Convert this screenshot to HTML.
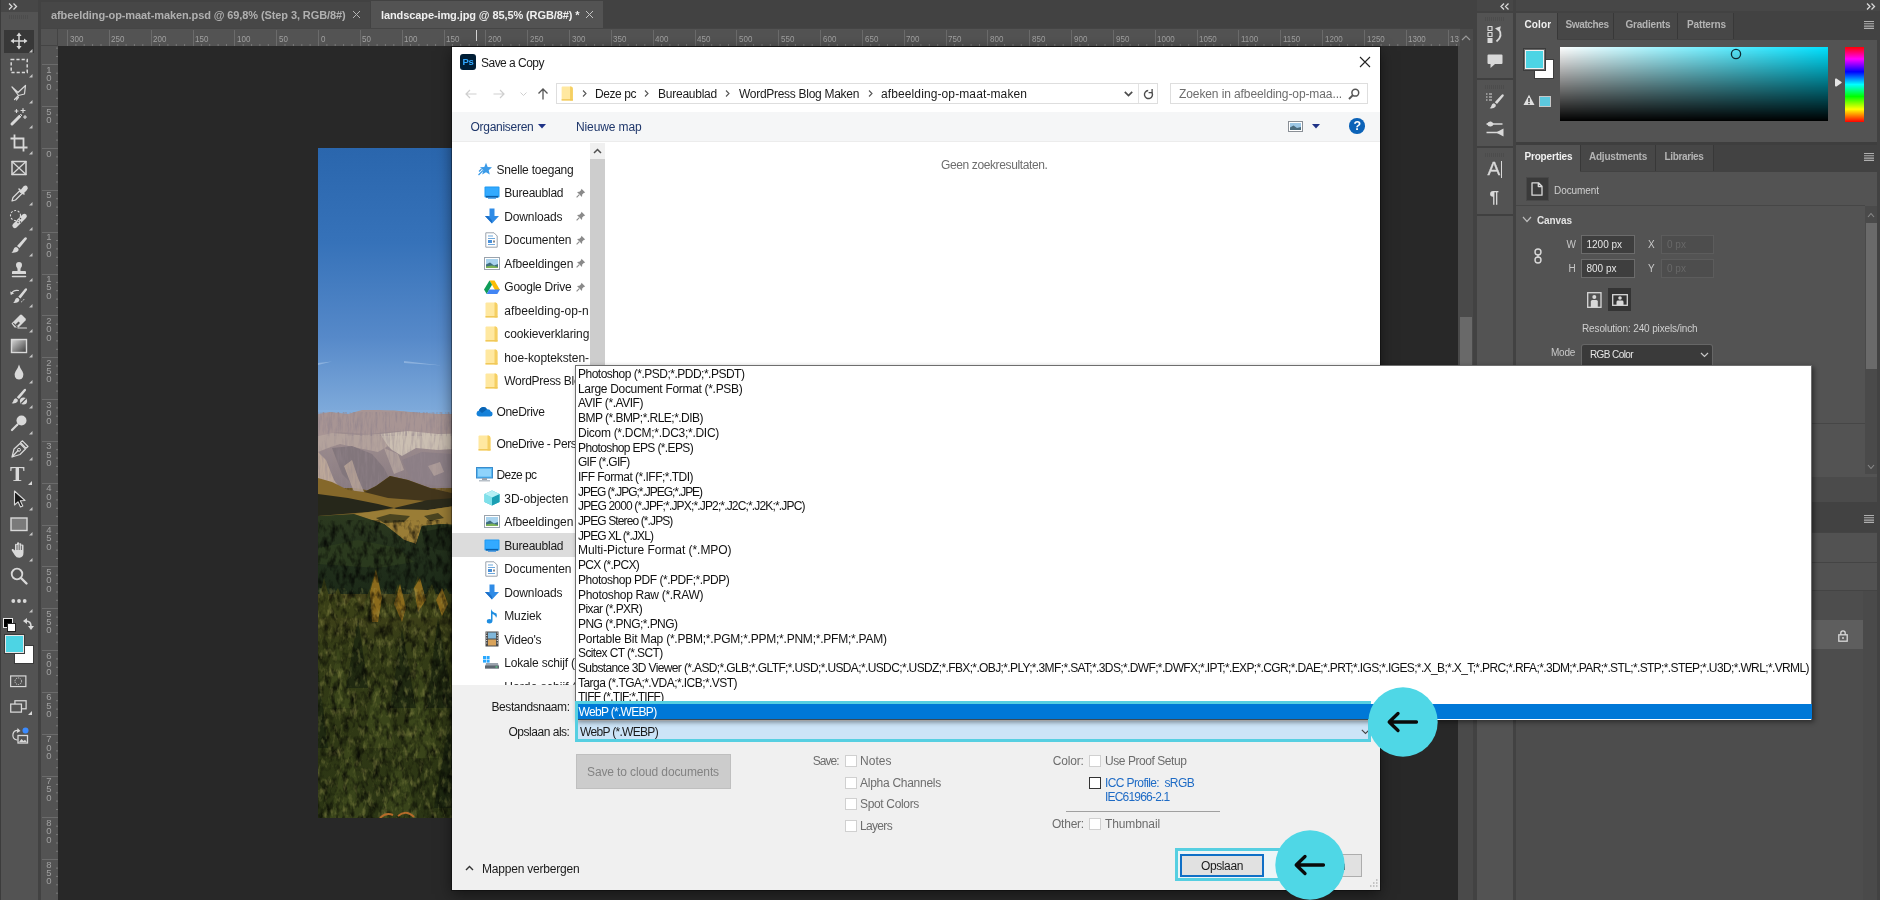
<!DOCTYPE html>
<html lang="nl">
<head>
<meta charset="utf-8">
<title>Save a Copy</title>
<style>
html,body{margin:0;padding:0;}
body{width:1880px;height:900px;overflow:hidden;position:relative;background:#282828;font-family:"Liberation Sans",sans-serif;font-size:12px;color:#000;}
.a{position:absolute;}
.t{position:absolute;white-space:pre;line-height:1;}
svg{position:absolute;overflow:visible;}
/* ---------- Photoshop chrome ---------- */
#tabbar{left:38px;top:0;width:1438px;height:29px;background:#424242;}
#tab1{left:41px;top:2px;width:329px;height:26px;background:#474747;}
#tab2{left:371px;top:1px;width:232px;height:27px;background:#535353;}
.tabt{font-weight:bold;font-size:11px;top:9.5px;letter-spacing:-0.1px;}
#hruler{left:41px;top:29px;box-shadow:0 -1px 0 #454545;width:1419px;height:17px;background:#535353;}
#vruler{left:41px;top:46px;width:17px;height:854px;background:#535353;}
.rl{transform:scaleX(.84);transform-origin:0 50%;}
#toolbar{left:0;top:0;width:38px;height:900px;background:#535353;}
#toolhead{left:0;top:0;width:38px;height:12px;background:#474747;}
.vsb{left:1460px;top:29px;width:13px;height:871px;background:#4a4a4a;}
/* right */
#rgap{left:1473px;top:0;width:407px;height:900px;background:#424242;}
#iconcol{left:1477px;top:13px;width:36px;height:887px;background:#535353;}
#rpanel{left:1516px;top:13px;width:364px;height:887px;background:#535353;}
.ptab{font-weight:bold;font-size:10px;color:#b9b9b9;}
/* ---------- Dialog ---------- */
#dlg{left:452px;top:47px;width:927.5px;height:842.5px;background:#fff;box-shadow:0 0 0 1px rgba(0,0,0,.35),0 4px 14px rgba(0,0,0,.5);}
.d{color:#1a1a1a;font-size:12px;}
.side{font-size:12px;color:#111;}
.li{left:578px;font-size:12px;color:#111;letter-spacing:-0.15px;}
.g{color:#6d6d6d;font-size:12px;}
.cb{width:10px;height:10px;border:1px solid #cfcfcf;background:#fff;}
#root{position:absolute;left:0;top:0;width:1880px;height:900px;will-change:transform;}
</style>
</head>
<body>
<div id="root">

<!-- ================= PHOTOSHOP BACKGROUND ================= -->
<div class="a" id="tabbar"></div>
<div class="a" id="tab1"></div>
<div class="a" id="tab2"></div>
<div class="t tabt" style="left:51px;color:#b0b0b0;">afbeelding-op-maat-maken.psd @ 69,8% (Step 3, RGB/8#)</div>
<svg style="left:352.8px;top:11.3px" width="7" height="7" viewBox="0 0 7 7"><path d="M0 0 L7 7 M7 0 L0 7" stroke="#b4b4b4" stroke-width="1"/></svg>
<div class="t tabt" style="left:381px;color:#f0f0f0;">landscape-img.jpg @ 85,5% (RGB/8#) *</div>
<svg style="left:585.8px;top:11.3px" width="7" height="7" viewBox="0 0 7 7"><path d="M0 0 L7 7 M7 0 L0 7" stroke="#c4c4c4" stroke-width="1"/></svg>

<div class="a" id="hruler"></div>
<div class="a" id="vruler"></div>
<div class="a vsb"></div>
<div class="a" style="left:67.0px;top:30px;width:1px;height:16px;background:#6b6b6b;"></div>
<div class="t rl" style="left:69.6px;top:33.8px;font-size:9.5px;color:#a0a0a0;">300</div>
<div class="a" style="left:108.8px;top:30px;width:1px;height:16px;background:#6b6b6b;"></div>
<div class="t rl" style="left:111.4px;top:33.8px;font-size:9.5px;color:#a0a0a0;">250</div>
<div class="a" style="left:150.7px;top:30px;width:1px;height:16px;background:#6b6b6b;"></div>
<div class="t rl" style="left:153.3px;top:33.8px;font-size:9.5px;color:#a0a0a0;">200</div>
<div class="a" style="left:192.5px;top:30px;width:1px;height:16px;background:#6b6b6b;"></div>
<div class="t rl" style="left:195.1px;top:33.8px;font-size:9.5px;color:#a0a0a0;">150</div>
<div class="a" style="left:234.3px;top:30px;width:1px;height:16px;background:#6b6b6b;"></div>
<div class="t rl" style="left:236.9px;top:33.8px;font-size:9.5px;color:#a0a0a0;">100</div>
<div class="a" style="left:276.2px;top:30px;width:1px;height:16px;background:#6b6b6b;"></div>
<div class="t rl" style="left:278.8px;top:33.8px;font-size:9.5px;color:#a0a0a0;">50</div>
<div class="a" style="left:318.0px;top:30px;width:1px;height:16px;background:#6b6b6b;"></div>
<div class="t rl" style="left:320.6px;top:33.8px;font-size:9.5px;color:#a0a0a0;">0</div>
<div class="a" style="left:359.8px;top:30px;width:1px;height:16px;background:#6b6b6b;"></div>
<div class="t rl" style="left:362.4px;top:33.8px;font-size:9.5px;color:#a0a0a0;">50</div>
<div class="a" style="left:401.7px;top:30px;width:1px;height:16px;background:#6b6b6b;"></div>
<div class="t rl" style="left:404.3px;top:33.8px;font-size:9.5px;color:#a0a0a0;">100</div>
<div class="a" style="left:443.5px;top:30px;width:1px;height:16px;background:#6b6b6b;"></div>
<div class="t rl" style="left:446.1px;top:33.8px;font-size:9.5px;color:#a0a0a0;">150</div>
<div class="a" style="left:485.3px;top:30px;width:1px;height:16px;background:#6b6b6b;"></div>
<div class="t rl" style="left:487.9px;top:33.8px;font-size:9.5px;color:#a0a0a0;">200</div>
<div class="a" style="left:527.2px;top:30px;width:1px;height:16px;background:#6b6b6b;"></div>
<div class="t rl" style="left:529.8px;top:33.8px;font-size:9.5px;color:#a0a0a0;">250</div>
<div class="a" style="left:569.0px;top:30px;width:1px;height:16px;background:#6b6b6b;"></div>
<div class="t rl" style="left:571.6px;top:33.8px;font-size:9.5px;color:#a0a0a0;">300</div>
<div class="a" style="left:610.8px;top:30px;width:1px;height:16px;background:#6b6b6b;"></div>
<div class="t rl" style="left:613.4px;top:33.8px;font-size:9.5px;color:#a0a0a0;">350</div>
<div class="a" style="left:652.7px;top:30px;width:1px;height:16px;background:#6b6b6b;"></div>
<div class="t rl" style="left:655.3px;top:33.8px;font-size:9.5px;color:#a0a0a0;">400</div>
<div class="a" style="left:694.5px;top:30px;width:1px;height:16px;background:#6b6b6b;"></div>
<div class="t rl" style="left:697.1px;top:33.8px;font-size:9.5px;color:#a0a0a0;">450</div>
<div class="a" style="left:736.4px;top:30px;width:1px;height:16px;background:#6b6b6b;"></div>
<div class="t rl" style="left:739.0px;top:33.8px;font-size:9.5px;color:#a0a0a0;">500</div>
<div class="a" style="left:778.2px;top:30px;width:1px;height:16px;background:#6b6b6b;"></div>
<div class="t rl" style="left:780.8px;top:33.8px;font-size:9.5px;color:#a0a0a0;">550</div>
<div class="a" style="left:820.0px;top:30px;width:1px;height:16px;background:#6b6b6b;"></div>
<div class="t rl" style="left:822.6px;top:33.8px;font-size:9.5px;color:#a0a0a0;">600</div>
<div class="a" style="left:861.9px;top:30px;width:1px;height:16px;background:#6b6b6b;"></div>
<div class="t rl" style="left:864.5px;top:33.8px;font-size:9.5px;color:#a0a0a0;">650</div>
<div class="a" style="left:903.7px;top:30px;width:1px;height:16px;background:#6b6b6b;"></div>
<div class="t rl" style="left:906.3px;top:33.8px;font-size:9.5px;color:#a0a0a0;">700</div>
<div class="a" style="left:945.5px;top:30px;width:1px;height:16px;background:#6b6b6b;"></div>
<div class="t rl" style="left:948.1px;top:33.8px;font-size:9.5px;color:#a0a0a0;">750</div>
<div class="a" style="left:987.4px;top:30px;width:1px;height:16px;background:#6b6b6b;"></div>
<div class="t rl" style="left:990.0px;top:33.8px;font-size:9.5px;color:#a0a0a0;">800</div>
<div class="a" style="left:1029.2px;top:30px;width:1px;height:16px;background:#6b6b6b;"></div>
<div class="t rl" style="left:1031.8px;top:33.8px;font-size:9.5px;color:#a0a0a0;">850</div>
<div class="a" style="left:1071.0px;top:30px;width:1px;height:16px;background:#6b6b6b;"></div>
<div class="t rl" style="left:1073.6px;top:33.8px;font-size:9.5px;color:#a0a0a0;">900</div>
<div class="a" style="left:1112.9px;top:30px;width:1px;height:16px;background:#6b6b6b;"></div>
<div class="t rl" style="left:1115.5px;top:33.8px;font-size:9.5px;color:#a0a0a0;">950</div>
<div class="a" style="left:1154.7px;top:30px;width:1px;height:16px;background:#6b6b6b;"></div>
<div class="t rl" style="left:1157.3px;top:33.8px;font-size:9.5px;color:#a0a0a0;">1000</div>
<div class="a" style="left:1196.5px;top:30px;width:1px;height:16px;background:#6b6b6b;"></div>
<div class="t rl" style="left:1199.1px;top:33.8px;font-size:9.5px;color:#a0a0a0;">1050</div>
<div class="a" style="left:1238.4px;top:30px;width:1px;height:16px;background:#6b6b6b;"></div>
<div class="t rl" style="left:1241.0px;top:33.8px;font-size:9.5px;color:#a0a0a0;">1100</div>
<div class="a" style="left:1280.2px;top:30px;width:1px;height:16px;background:#6b6b6b;"></div>
<div class="t rl" style="left:1282.8px;top:33.8px;font-size:9.5px;color:#a0a0a0;">1150</div>
<div class="a" style="left:1322.0px;top:30px;width:1px;height:16px;background:#6b6b6b;"></div>
<div class="t rl" style="left:1324.6px;top:33.8px;font-size:9.5px;color:#a0a0a0;">1200</div>
<div class="a" style="left:1363.9px;top:30px;width:1px;height:16px;background:#6b6b6b;"></div>
<div class="t rl" style="left:1366.5px;top:33.8px;font-size:9.5px;color:#a0a0a0;">1250</div>
<div class="a" style="left:1405.7px;top:30px;width:1px;height:16px;background:#6b6b6b;"></div>
<div class="t rl" style="left:1408.3px;top:33.8px;font-size:9.5px;color:#a0a0a0;">1300</div>
<div class="a" style="left:1447.5px;top:30px;width:1px;height:16px;background:#6b6b6b;"></div>
<div class="t rl" style="left:1450.1px;top:33.8px;font-size:9.5px;color:#a0a0a0;">13</div>
<svg style="left:41px;top:44px;" width="1417" height="2" viewBox="0 0 1417 2"><rect x="34.4" y="0" width="1" height="2" fill="#787878"/><rect x="42.7" y="0" width="1" height="2" fill="#787878"/><rect x="51.1" y="0" width="1" height="2" fill="#787878"/><rect x="59.5" y="0" width="1" height="2" fill="#787878"/><rect x="76.2" y="0" width="1" height="2" fill="#787878"/><rect x="84.6" y="0" width="1" height="2" fill="#787878"/><rect x="92.9" y="0" width="1" height="2" fill="#787878"/><rect x="101.3" y="0" width="1" height="2" fill="#787878"/><rect x="118.0" y="0" width="1" height="2" fill="#787878"/><rect x="126.4" y="0" width="1" height="2" fill="#787878"/><rect x="134.8" y="0" width="1" height="2" fill="#787878"/><rect x="143.1" y="0" width="1" height="2" fill="#787878"/><rect x="159.9" y="0" width="1" height="2" fill="#787878"/><rect x="168.2" y="0" width="1" height="2" fill="#787878"/><rect x="176.6" y="0" width="1" height="2" fill="#787878"/><rect x="185.0" y="0" width="1" height="2" fill="#787878"/><rect x="201.7" y="0" width="1" height="2" fill="#787878"/><rect x="210.1" y="0" width="1" height="2" fill="#787878"/><rect x="218.4" y="0" width="1" height="2" fill="#787878"/><rect x="226.8" y="0" width="1" height="2" fill="#787878"/><rect x="243.5" y="0" width="1" height="2" fill="#787878"/><rect x="251.9" y="0" width="1" height="2" fill="#787878"/><rect x="260.3" y="0" width="1" height="2" fill="#787878"/><rect x="268.6" y="0" width="1" height="2" fill="#787878"/><rect x="285.4" y="0" width="1" height="2" fill="#787878"/><rect x="293.7" y="0" width="1" height="2" fill="#787878"/><rect x="302.1" y="0" width="1" height="2" fill="#787878"/><rect x="310.5" y="0" width="1" height="2" fill="#787878"/><rect x="327.2" y="0" width="1" height="2" fill="#787878"/><rect x="335.6" y="0" width="1" height="2" fill="#787878"/><rect x="343.9" y="0" width="1" height="2" fill="#787878"/><rect x="352.3" y="0" width="1" height="2" fill="#787878"/><rect x="369.0" y="0" width="1" height="2" fill="#787878"/><rect x="377.4" y="0" width="1" height="2" fill="#787878"/><rect x="385.8" y="0" width="1" height="2" fill="#787878"/><rect x="394.1" y="0" width="1" height="2" fill="#787878"/><rect x="410.9" y="0" width="1" height="2" fill="#787878"/><rect x="419.2" y="0" width="1" height="2" fill="#787878"/><rect x="427.6" y="0" width="1" height="2" fill="#787878"/><rect x="436.0" y="0" width="1" height="2" fill="#787878"/><rect x="452.7" y="0" width="1" height="2" fill="#787878"/><rect x="461.1" y="0" width="1" height="2" fill="#787878"/><rect x="469.4" y="0" width="1" height="2" fill="#787878"/><rect x="477.8" y="0" width="1" height="2" fill="#787878"/><rect x="494.5" y="0" width="1" height="2" fill="#787878"/><rect x="502.9" y="0" width="1" height="2" fill="#787878"/><rect x="511.3" y="0" width="1" height="2" fill="#787878"/><rect x="519.6" y="0" width="1" height="2" fill="#787878"/><rect x="536.4" y="0" width="1" height="2" fill="#787878"/><rect x="544.7" y="0" width="1" height="2" fill="#787878"/><rect x="553.1" y="0" width="1" height="2" fill="#787878"/><rect x="561.5" y="0" width="1" height="2" fill="#787878"/><rect x="578.2" y="0" width="1" height="2" fill="#787878"/><rect x="586.6" y="0" width="1" height="2" fill="#787878"/><rect x="594.9" y="0" width="1" height="2" fill="#787878"/><rect x="603.3" y="0" width="1" height="2" fill="#787878"/><rect x="620.0" y="0" width="1" height="2" fill="#787878"/><rect x="628.4" y="0" width="1" height="2" fill="#787878"/><rect x="636.8" y="0" width="1" height="2" fill="#787878"/><rect x="645.1" y="0" width="1" height="2" fill="#787878"/><rect x="661.9" y="0" width="1" height="2" fill="#787878"/><rect x="670.2" y="0" width="1" height="2" fill="#787878"/><rect x="678.6" y="0" width="1" height="2" fill="#787878"/><rect x="687.0" y="0" width="1" height="2" fill="#787878"/><rect x="703.7" y="0" width="1" height="2" fill="#787878"/><rect x="712.1" y="0" width="1" height="2" fill="#787878"/><rect x="720.5" y="0" width="1" height="2" fill="#787878"/><rect x="728.8" y="0" width="1" height="2" fill="#787878"/><rect x="745.6" y="0" width="1" height="2" fill="#787878"/><rect x="753.9" y="0" width="1" height="2" fill="#787878"/><rect x="762.3" y="0" width="1" height="2" fill="#787878"/><rect x="770.7" y="0" width="1" height="2" fill="#787878"/><rect x="787.4" y="0" width="1" height="2" fill="#787878"/><rect x="795.8" y="0" width="1" height="2" fill="#787878"/><rect x="804.1" y="0" width="1" height="2" fill="#787878"/><rect x="812.5" y="0" width="1" height="2" fill="#787878"/><rect x="829.2" y="0" width="1" height="2" fill="#787878"/><rect x="837.6" y="0" width="1" height="2" fill="#787878"/><rect x="846.0" y="0" width="1" height="2" fill="#787878"/><rect x="854.3" y="0" width="1" height="2" fill="#787878"/><rect x="871.1" y="0" width="1" height="2" fill="#787878"/><rect x="879.4" y="0" width="1" height="2" fill="#787878"/><rect x="887.8" y="0" width="1" height="2" fill="#787878"/><rect x="896.2" y="0" width="1" height="2" fill="#787878"/><rect x="912.9" y="0" width="1" height="2" fill="#787878"/><rect x="921.3" y="0" width="1" height="2" fill="#787878"/><rect x="929.6" y="0" width="1" height="2" fill="#787878"/><rect x="938.0" y="0" width="1" height="2" fill="#787878"/><rect x="954.7" y="0" width="1" height="2" fill="#787878"/><rect x="963.1" y="0" width="1" height="2" fill="#787878"/><rect x="971.5" y="0" width="1" height="2" fill="#787878"/><rect x="979.8" y="0" width="1" height="2" fill="#787878"/><rect x="996.6" y="0" width="1" height="2" fill="#787878"/><rect x="1004.9" y="0" width="1" height="2" fill="#787878"/><rect x="1013.3" y="0" width="1" height="2" fill="#787878"/><rect x="1021.7" y="0" width="1" height="2" fill="#787878"/><rect x="1038.4" y="0" width="1" height="2" fill="#787878"/><rect x="1046.8" y="0" width="1" height="2" fill="#787878"/><rect x="1055.1" y="0" width="1" height="2" fill="#787878"/><rect x="1063.5" y="0" width="1" height="2" fill="#787878"/><rect x="1080.2" y="0" width="1" height="2" fill="#787878"/><rect x="1088.6" y="0" width="1" height="2" fill="#787878"/><rect x="1097.0" y="0" width="1" height="2" fill="#787878"/><rect x="1105.3" y="0" width="1" height="2" fill="#787878"/><rect x="1122.1" y="0" width="1" height="2" fill="#787878"/><rect x="1130.4" y="0" width="1" height="2" fill="#787878"/><rect x="1138.8" y="0" width="1" height="2" fill="#787878"/><rect x="1147.2" y="0" width="1" height="2" fill="#787878"/><rect x="1163.9" y="0" width="1" height="2" fill="#787878"/><rect x="1172.3" y="0" width="1" height="2" fill="#787878"/><rect x="1180.6" y="0" width="1" height="2" fill="#787878"/><rect x="1189.0" y="0" width="1" height="2" fill="#787878"/><rect x="1205.7" y="0" width="1" height="2" fill="#787878"/><rect x="1214.1" y="0" width="1" height="2" fill="#787878"/><rect x="1222.5" y="0" width="1" height="2" fill="#787878"/><rect x="1230.8" y="0" width="1" height="2" fill="#787878"/><rect x="1247.6" y="0" width="1" height="2" fill="#787878"/><rect x="1255.9" y="0" width="1" height="2" fill="#787878"/><rect x="1264.3" y="0" width="1" height="2" fill="#787878"/><rect x="1272.7" y="0" width="1" height="2" fill="#787878"/><rect x="1289.4" y="0" width="1" height="2" fill="#787878"/><rect x="1297.8" y="0" width="1" height="2" fill="#787878"/><rect x="1306.1" y="0" width="1" height="2" fill="#787878"/><rect x="1314.5" y="0" width="1" height="2" fill="#787878"/><rect x="1331.2" y="0" width="1" height="2" fill="#787878"/><rect x="1339.6" y="0" width="1" height="2" fill="#787878"/><rect x="1348.0" y="0" width="1" height="2" fill="#787878"/><rect x="1356.3" y="0" width="1" height="2" fill="#787878"/><rect x="1373.1" y="0" width="1" height="2" fill="#787878"/><rect x="1381.4" y="0" width="1" height="2" fill="#787878"/><rect x="1389.8" y="0" width="1" height="2" fill="#787878"/><rect x="1398.2" y="0" width="1" height="2" fill="#787878"/><rect x="1414.9" y="0" width="1" height="2" fill="#787878"/></svg>
<div class="a" style="left:475.6px;top:30px;width:1.3px;height:10.5px;background:#d4d4d4;"></div>
<div class="a" style="left:41px;top:29px;width:17px;height:17px;background:#535353;border-right:1px solid #444;border-bottom:1px solid #444;box-sizing:border-box;"></div>
<div class="a" style="left:42px;top:64.3px;width:16px;height:1px;background:#6b6b6b;"></div>
<div class="t " style="left:46.3px;top:64.9px;font-size:9.5px;color:#a0a0a0;">1</div>
<div class="t " style="left:46.3px;top:73.2px;font-size:9.5px;color:#a0a0a0;">0</div>
<div class="t " style="left:46.3px;top:81.5px;font-size:9.5px;color:#a0a0a0;">0</div>
<div class="a" style="left:42px;top:106.2px;width:16px;height:1px;background:#6b6b6b;"></div>
<div class="t " style="left:46.3px;top:106.7px;font-size:9.5px;color:#a0a0a0;">5</div>
<div class="t " style="left:46.3px;top:115.0px;font-size:9.5px;color:#a0a0a0;">0</div>
<div class="a" style="left:42px;top:148.0px;width:16px;height:1px;background:#6b6b6b;"></div>
<div class="t " style="left:46.3px;top:148.5px;font-size:9.5px;color:#a0a0a0;">0</div>
<div class="a" style="left:42px;top:189.8px;width:16px;height:1px;background:#6b6b6b;"></div>
<div class="t " style="left:46.3px;top:190.4px;font-size:9.5px;color:#a0a0a0;">5</div>
<div class="t " style="left:46.3px;top:198.7px;font-size:9.5px;color:#a0a0a0;">0</div>
<div class="a" style="left:42px;top:231.7px;width:16px;height:1px;background:#6b6b6b;"></div>
<div class="t " style="left:46.3px;top:232.2px;font-size:9.5px;color:#a0a0a0;">1</div>
<div class="t " style="left:46.3px;top:240.5px;font-size:9.5px;color:#a0a0a0;">0</div>
<div class="t " style="left:46.3px;top:248.8px;font-size:9.5px;color:#a0a0a0;">0</div>
<div class="a" style="left:42px;top:273.5px;width:16px;height:1px;background:#6b6b6b;"></div>
<div class="t " style="left:46.3px;top:274.0px;font-size:9.5px;color:#a0a0a0;">1</div>
<div class="t " style="left:46.3px;top:282.3px;font-size:9.5px;color:#a0a0a0;">5</div>
<div class="t " style="left:46.3px;top:290.6px;font-size:9.5px;color:#a0a0a0;">0</div>
<div class="a" style="left:42px;top:315.3px;width:16px;height:1px;background:#6b6b6b;"></div>
<div class="t " style="left:46.3px;top:315.9px;font-size:9.5px;color:#a0a0a0;">2</div>
<div class="t " style="left:46.3px;top:324.2px;font-size:9.5px;color:#a0a0a0;">0</div>
<div class="t " style="left:46.3px;top:332.5px;font-size:9.5px;color:#a0a0a0;">0</div>
<div class="a" style="left:42px;top:357.2px;width:16px;height:1px;background:#6b6b6b;"></div>
<div class="t " style="left:46.3px;top:357.7px;font-size:9.5px;color:#a0a0a0;">2</div>
<div class="t " style="left:46.3px;top:366.0px;font-size:9.5px;color:#a0a0a0;">5</div>
<div class="t " style="left:46.3px;top:374.3px;font-size:9.5px;color:#a0a0a0;">0</div>
<div class="a" style="left:42px;top:399.0px;width:16px;height:1px;background:#6b6b6b;"></div>
<div class="t " style="left:46.3px;top:399.5px;font-size:9.5px;color:#a0a0a0;">3</div>
<div class="t " style="left:46.3px;top:407.8px;font-size:9.5px;color:#a0a0a0;">0</div>
<div class="t " style="left:46.3px;top:416.1px;font-size:9.5px;color:#a0a0a0;">0</div>
<div class="a" style="left:42px;top:440.8px;width:16px;height:1px;background:#6b6b6b;"></div>
<div class="t " style="left:46.3px;top:441.4px;font-size:9.5px;color:#a0a0a0;">3</div>
<div class="t " style="left:46.3px;top:449.7px;font-size:9.5px;color:#a0a0a0;">5</div>
<div class="t " style="left:46.3px;top:458.0px;font-size:9.5px;color:#a0a0a0;">0</div>
<div class="a" style="left:42px;top:482.7px;width:16px;height:1px;background:#6b6b6b;"></div>
<div class="t " style="left:46.3px;top:483.2px;font-size:9.5px;color:#a0a0a0;">4</div>
<div class="t " style="left:46.3px;top:491.5px;font-size:9.5px;color:#a0a0a0;">0</div>
<div class="t " style="left:46.3px;top:499.8px;font-size:9.5px;color:#a0a0a0;">0</div>
<div class="a" style="left:42px;top:524.5px;width:16px;height:1px;background:#6b6b6b;"></div>
<div class="t " style="left:46.3px;top:525.0px;font-size:9.5px;color:#a0a0a0;">4</div>
<div class="t " style="left:46.3px;top:533.3px;font-size:9.5px;color:#a0a0a0;">5</div>
<div class="t " style="left:46.3px;top:541.6px;font-size:9.5px;color:#a0a0a0;">0</div>
<div class="a" style="left:42px;top:566.4px;width:16px;height:1px;background:#6b6b6b;"></div>
<div class="t " style="left:46.3px;top:566.9px;font-size:9.5px;color:#a0a0a0;">5</div>
<div class="t " style="left:46.3px;top:575.2px;font-size:9.5px;color:#a0a0a0;">0</div>
<div class="t " style="left:46.3px;top:583.5px;font-size:9.5px;color:#a0a0a0;">0</div>
<div class="a" style="left:42px;top:608.2px;width:16px;height:1px;background:#6b6b6b;"></div>
<div class="t " style="left:46.3px;top:608.7px;font-size:9.5px;color:#a0a0a0;">5</div>
<div class="t " style="left:46.3px;top:617.0px;font-size:9.5px;color:#a0a0a0;">5</div>
<div class="t " style="left:46.3px;top:625.3px;font-size:9.5px;color:#a0a0a0;">0</div>
<div class="a" style="left:42px;top:650.0px;width:16px;height:1px;background:#6b6b6b;"></div>
<div class="t " style="left:46.3px;top:650.6px;font-size:9.5px;color:#a0a0a0;">6</div>
<div class="t " style="left:46.3px;top:658.9px;font-size:9.5px;color:#a0a0a0;">0</div>
<div class="t " style="left:46.3px;top:667.2px;font-size:9.5px;color:#a0a0a0;">0</div>
<div class="a" style="left:42px;top:691.9px;width:16px;height:1px;background:#6b6b6b;"></div>
<div class="t " style="left:46.3px;top:692.4px;font-size:9.5px;color:#a0a0a0;">6</div>
<div class="t " style="left:46.3px;top:700.7px;font-size:9.5px;color:#a0a0a0;">5</div>
<div class="t " style="left:46.3px;top:709.0px;font-size:9.5px;color:#a0a0a0;">0</div>
<div class="a" style="left:42px;top:733.7px;width:16px;height:1px;background:#6b6b6b;"></div>
<div class="t " style="left:46.3px;top:734.2px;font-size:9.5px;color:#a0a0a0;">7</div>
<div class="t " style="left:46.3px;top:742.5px;font-size:9.5px;color:#a0a0a0;">0</div>
<div class="t " style="left:46.3px;top:750.8px;font-size:9.5px;color:#a0a0a0;">0</div>
<div class="a" style="left:42px;top:775.5px;width:16px;height:1px;background:#6b6b6b;"></div>
<div class="t " style="left:46.3px;top:776.1px;font-size:9.5px;color:#a0a0a0;">7</div>
<div class="t " style="left:46.3px;top:784.4px;font-size:9.5px;color:#a0a0a0;">5</div>
<div class="t " style="left:46.3px;top:792.7px;font-size:9.5px;color:#a0a0a0;">0</div>
<div class="a" style="left:42px;top:817.4px;width:16px;height:1px;background:#6b6b6b;"></div>
<div class="t " style="left:46.3px;top:817.9px;font-size:9.5px;color:#a0a0a0;">8</div>
<div class="t " style="left:46.3px;top:826.2px;font-size:9.5px;color:#a0a0a0;">0</div>
<div class="t " style="left:46.3px;top:834.5px;font-size:9.5px;color:#a0a0a0;">0</div>
<div class="a" style="left:42px;top:859.2px;width:16px;height:1px;background:#6b6b6b;"></div>
<div class="t " style="left:46.3px;top:859.7px;font-size:9.5px;color:#a0a0a0;">8</div>
<div class="t " style="left:46.3px;top:868.0px;font-size:9.5px;color:#a0a0a0;">5</div>
<div class="t " style="left:46.3px;top:876.3px;font-size:9.5px;color:#a0a0a0;">0</div>
<svg style="left:56px;top:46px;" width="2" height="854" viewBox="0 0 2 854"><rect x="0" y="1.6" width="2" height="1" fill="#787878"/><rect x="0" y="10.0" width="2" height="1" fill="#787878"/><rect x="0" y="26.7" width="2" height="1" fill="#787878"/><rect x="0" y="35.1" width="2" height="1" fill="#787878"/><rect x="0" y="43.4" width="2" height="1" fill="#787878"/><rect x="0" y="51.8" width="2" height="1" fill="#787878"/><rect x="0" y="68.5" width="2" height="1" fill="#787878"/><rect x="0" y="76.9" width="2" height="1" fill="#787878"/><rect x="0" y="85.3" width="2" height="1" fill="#787878"/><rect x="0" y="93.6" width="2" height="1" fill="#787878"/><rect x="0" y="110.4" width="2" height="1" fill="#787878"/><rect x="0" y="118.7" width="2" height="1" fill="#787878"/><rect x="0" y="127.1" width="2" height="1" fill="#787878"/><rect x="0" y="135.5" width="2" height="1" fill="#787878"/><rect x="0" y="152.2" width="2" height="1" fill="#787878"/><rect x="0" y="160.6" width="2" height="1" fill="#787878"/><rect x="0" y="168.9" width="2" height="1" fill="#787878"/><rect x="0" y="177.3" width="2" height="1" fill="#787878"/><rect x="0" y="194.0" width="2" height="1" fill="#787878"/><rect x="0" y="202.4" width="2" height="1" fill="#787878"/><rect x="0" y="210.8" width="2" height="1" fill="#787878"/><rect x="0" y="219.1" width="2" height="1" fill="#787878"/><rect x="0" y="235.9" width="2" height="1" fill="#787878"/><rect x="0" y="244.2" width="2" height="1" fill="#787878"/><rect x="0" y="252.6" width="2" height="1" fill="#787878"/><rect x="0" y="261.0" width="2" height="1" fill="#787878"/><rect x="0" y="277.7" width="2" height="1" fill="#787878"/><rect x="0" y="286.1" width="2" height="1" fill="#787878"/><rect x="0" y="294.4" width="2" height="1" fill="#787878"/><rect x="0" y="302.8" width="2" height="1" fill="#787878"/><rect x="0" y="319.5" width="2" height="1" fill="#787878"/><rect x="0" y="327.9" width="2" height="1" fill="#787878"/><rect x="0" y="336.3" width="2" height="1" fill="#787878"/><rect x="0" y="344.6" width="2" height="1" fill="#787878"/><rect x="0" y="361.4" width="2" height="1" fill="#787878"/><rect x="0" y="369.7" width="2" height="1" fill="#787878"/><rect x="0" y="378.1" width="2" height="1" fill="#787878"/><rect x="0" y="386.5" width="2" height="1" fill="#787878"/><rect x="0" y="403.2" width="2" height="1" fill="#787878"/><rect x="0" y="411.6" width="2" height="1" fill="#787878"/><rect x="0" y="419.9" width="2" height="1" fill="#787878"/><rect x="0" y="428.3" width="2" height="1" fill="#787878"/><rect x="0" y="445.0" width="2" height="1" fill="#787878"/><rect x="0" y="453.4" width="2" height="1" fill="#787878"/><rect x="0" y="461.8" width="2" height="1" fill="#787878"/><rect x="0" y="470.1" width="2" height="1" fill="#787878"/><rect x="0" y="486.9" width="2" height="1" fill="#787878"/><rect x="0" y="495.2" width="2" height="1" fill="#787878"/><rect x="0" y="503.6" width="2" height="1" fill="#787878"/><rect x="0" y="512.0" width="2" height="1" fill="#787878"/><rect x="0" y="528.7" width="2" height="1" fill="#787878"/><rect x="0" y="537.1" width="2" height="1" fill="#787878"/><rect x="0" y="545.5" width="2" height="1" fill="#787878"/><rect x="0" y="553.8" width="2" height="1" fill="#787878"/><rect x="0" y="570.6" width="2" height="1" fill="#787878"/><rect x="0" y="578.9" width="2" height="1" fill="#787878"/><rect x="0" y="587.3" width="2" height="1" fill="#787878"/><rect x="0" y="595.7" width="2" height="1" fill="#787878"/><rect x="0" y="612.4" width="2" height="1" fill="#787878"/><rect x="0" y="620.8" width="2" height="1" fill="#787878"/><rect x="0" y="629.1" width="2" height="1" fill="#787878"/><rect x="0" y="637.5" width="2" height="1" fill="#787878"/><rect x="0" y="654.2" width="2" height="1" fill="#787878"/><rect x="0" y="662.6" width="2" height="1" fill="#787878"/><rect x="0" y="671.0" width="2" height="1" fill="#787878"/><rect x="0" y="679.3" width="2" height="1" fill="#787878"/><rect x="0" y="696.1" width="2" height="1" fill="#787878"/><rect x="0" y="704.4" width="2" height="1" fill="#787878"/><rect x="0" y="712.8" width="2" height="1" fill="#787878"/><rect x="0" y="721.2" width="2" height="1" fill="#787878"/><rect x="0" y="737.9" width="2" height="1" fill="#787878"/><rect x="0" y="746.3" width="2" height="1" fill="#787878"/><rect x="0" y="754.6" width="2" height="1" fill="#787878"/><rect x="0" y="763.0" width="2" height="1" fill="#787878"/><rect x="0" y="779.7" width="2" height="1" fill="#787878"/><rect x="0" y="788.1" width="2" height="1" fill="#787878"/><rect x="0" y="796.5" width="2" height="1" fill="#787878"/><rect x="0" y="804.8" width="2" height="1" fill="#787878"/><rect x="0" y="821.6" width="2" height="1" fill="#787878"/><rect x="0" y="829.9" width="2" height="1" fill="#787878"/><rect x="0" y="838.3" width="2" height="1" fill="#787878"/><rect x="0" y="846.7" width="2" height="1" fill="#787878"/></svg>
<div class="a" style="left:1460px;top:29px;width:13px;height:17px;background:#4a4a4a;"></div>
<div class="a" style="left:1458px;top:46px;width:15px;height:854px;background:#4a4a4a;"></div>
<svg style="left:1461px;top:34px;" width="10" height="8" viewBox="0 0 10 8"><path d="M1 6 L5 2 L9 6" fill="none" stroke="#9a9a9a" stroke-width="1.2"/></svg>
<div class="a" style="left:1460px;top:317px;width:12px;height:60px;background:#696969;"></div>


<svg style="left:318px;top:148px;overflow:hidden;" width="150" height="670" viewBox="0 0 150 670">
<defs>
<linearGradient id="sky" x1="0" y1="0" x2="0" y2="1">
<stop offset="0" stop-color="#2a66ad"/><stop offset=".35" stop-color="#3672b9"/><stop offset=".7" stop-color="#5689c9"/><stop offset="1" stop-color="#82addc"/>
</linearGradient>
<linearGradient id="rock" x1="0" y1="0" x2="0" y2="1">
<stop offset="0" stop-color="#a59392"/><stop offset=".45" stop-color="#9a8a8c"/><stop offset="1" stop-color="#877a80"/>
</linearGradient>
<linearGradient id="forest" x1="0" y1="0" x2="0" y2="1">
<stop offset="0" stop-color="#2c3a1f"/><stop offset=".5" stop-color="#22301c"/><stop offset="1" stop-color="#1c2a18"/>
</linearGradient>
<linearGradient id="trees" x1="0" y1="0" x2="0" y2="1">
<stop offset="0" stop-color="#45431a"/><stop offset=".25" stop-color="#343c16"/><stop offset="1" stop-color="#2b3514"/>
</linearGradient>
<filter id="nd" x="0" y="0" width="100%" height="100%"><feTurbulence type="fractalNoise" baseFrequency="0.16 0.09" numOctaves="3" seed="7"/><feColorMatrix values="0 0 0 0 0  0 0 0 0 0  0 0 0 0 0  2.4 0 0 0 -1.05"/></filter>
<filter id="nl" x="0" y="0" width="100%" height="100%"><feTurbulence type="fractalNoise" baseFrequency="0.2 0.1" numOctaves="3" seed="21"/><feColorMatrix values="0 0 0 0 .48  0 0 0 0 .46  0 0 0 0 .12  0 2.4 0 0 -1.25"/></filter>
<filter id="nr" x="0" y="0" width="100%" height="100%"><feTurbulence type="fractalNoise" baseFrequency="0.4 0.06" numOctaves="3" seed="4"/><feColorMatrix values="0 0 0 0 .3  0 0 0 0 .24  0 0 0 0 .27  2.4 0 0 0 -1.0"/></filter>
</defs>
<rect x="0" y="0" width="150" height="270" fill="url(#sky)"/>
<path d="M0 215 l14 -1.5 l-14 3.5z M86 213 l38 4.5 l-38 -2.5z" fill="#9cbde4" opacity=".7"/>
<!-- base bands (full coverage) -->
<rect x="0" y="262" width="150" height="82" fill="url(#rock)"/>
<rect x="0" y="340" width="150" height="30" fill="#6d5622"/>
<rect x="0" y="364" width="150" height="80" fill="url(#forest)"/>
<rect x="0" y="442" width="150" height="228" fill="url(#trees)"/>
<!-- sky notches above rock crest -->
<path d="M0 262 H150 V268 L134 266 L120 266 L105 265 L92 264 L76 262.5 L62 263 L52 262 L44 263 L36 268 L28 271 L20 270 L12 268 L6 271 L0 274Z" fill="#82addc"/>
<!-- rock detail -->
<path d="M0 266 L12 264 L30 266 L44 262 L62 262 L80 263 L100 265 L134 267 L150 268 L150 284 L110 286 L80 283 L50 286 L20 284 L0 288Z" fill="#a89594"/>
<path d="M62 286 L90 283 L120 286 L150 285 L150 300 L120 302 L98 300 L84 308 L74 302 L66 294Z" fill="#cbbfb2"/>
<path d="M0 288 L14 285 L40 287 L62 286 L70 298 L60 304 L40 300 L22 296 L10 300 L0 304Z" fill="#b3a29c"/>
<path d="M14 300 L34 298 L54 306 L66 320 L74 336 L58 344 L38 340 L24 326Z" fill="#82767c"/>
<path d="M84 312 L104 304 L134 306 L150 306 L150 340 L120 338 L96 334 L88 322Z" fill="#8c7f86"/>
<path d="M0 304 L8 312 L16 332 L26 346 L0 346Z" fill="#bda899"/>
<path d="M26 318 L34 312 L40 330 L46 344 L36 344Z" fill="#b9a598" opacity=".85"/>
<path d="M66 300 L80 306 L86 322 L76 326Z" fill="#b7a69f" opacity=".8"/>
<path d="M110 318 L122 314 L126 324 L116 328Z" fill="#b5a49e" opacity=".8"/>
<rect x="0" y="264" width="150" height="24" filter="url(#nr)" opacity=".9"/>
<rect x="0" y="288" width="150" height="56" filter="url(#nr)" opacity=".45"/>
<!-- ridge + meadow -->
<path d="M0 330 L14 334 L30 342 L46 344 L58 338 L72 328 L90 332 L112 340 L134 345 L150 346 L150 372 L0 372Z" fill="#85682a"/>
<path d="M46 344 L58 338 L72 328 L90 332 L112 340 L134 345 L150 346 L150 350 L120 354 L96 352 L70 350Z" fill="#43361c"/>
<path d="M0 346 L30 350 L60 356 L76 360 L50 364 L0 368Z" fill="#26271a"/>
<path d="M76 360 L110 352 L150 349 L150 356 L110 362 L90 366Z" fill="#2c2b1b"/>
<path d="M36 366 L76 361 L110 362 L150 356 L150 378 L124 376 L104 378 L98 396 L86 392 L66 376Z" fill="#9a7d36"/>
<path d="M58 370 L72 366 L92 368 L86 374 L66 375Z M106 368 L120 365 L126 370 L112 373Z" fill="#4a4420"/>
<!-- dark forest body -->
<path d="M0 368 L36 366 L66 376 L86 392 L98 396 L104 378 L124 376 L150 378 L150 446 L0 446Z" fill="url(#forest)"/>
<path d="M104 384 L134 378 L150 380 L150 404 L120 402 L106 396Z" fill="#1c2817"/>
<path d="M0 400 L40 392 L80 400 L96 414 L60 420 L0 416Z" fill="#2f3f20" opacity=".7"/>
<!-- foreground trees -->
<path d="M0 455 L6 430 L12 452 L20 440 L28 458 L36 446 L44 462 L52 440 L58 420 L64 448 L72 460 L80 436 L86 456 L94 444 L100 428 L106 450 L114 436 L120 452 L128 440 L134 450 L150 446 L150 470 L0 470Z" fill="#3a4017"/>
<path d="M52 444 L58 422 L64 450 L60 474 L54 474Z M76 456 L82 436 L88 460 L84 474Z M96 440 L102 430 L108 452 L100 464Z M118 452 L124 440 L130 456 L124 468Z" fill="#8a6a1c"/>
<path d="M20 500 L34 560 L8 560Z M60 520 L78 600 L44 600Z M100 510 L120 610 L84 610Z M30 590 L48 670 L12 670Z M80 600 L100 670 L62 670Z" fill="#3f4a1c" opacity=".7"/>
<path d="M40 470 L50 540 L28 540Z M84 480 L98 560 L72 560Z M120 470 L136 560 L108 560Z M0 520 L10 600 L0 600Z M130 580 L150 660 L116 660Z" fill="#1c2610" opacity=".8"/>
<rect x="0" y="372" width="150" height="298" filter="url(#nd)" opacity=".75"/>
<rect x="0" y="440" width="150" height="230" filter="url(#nl)" opacity=".45"/>
<path d="M62 670 q6 -6 13 -3 M80 668 q8 -7 16 1" fill="none" stroke="#b56a2a" stroke-width="2"/>
</svg>


<div class="a" id="toolbar"></div>
<div class="a" id="toolhead"></div>
<svg style="left:8px;top:3px;" width="10" height="7" viewBox="0 0 10 7"><path d="M1 0.5 L4 3.5 L1 6.5 M5.5 0.5 L8.5 3.5 L5.5 6.5" fill="none" stroke="#d9d9d9" stroke-width="1.3"/></svg>
<div class="a" style="left:9px;top:15px;width:20px;height:4px;background:repeating-linear-gradient(90deg,#4c4c4c 0 1px,transparent 1px 2px);"></div>
<div class="a" style="left:0px;top:0px;width:1px;height:900px;background:#3c3c3c;"></div>
<div class="a" style="left:38px;top:0px;width:3px;height:900px;background:#424242;"></div>
<div class="a" style="left:4px;top:30px;width:30px;height:23px;background:#383838;"></div>
<svg style="left:8.5px;top:31px;" width="20" height="20" viewBox="0 0 20 20"><path d="M10 3.5 V16.5 M3.5 10 H16.5" fill="none" stroke="#d9d9d9" stroke-width="1.5" stroke-linecap="round" stroke-linejoin="round"/><path d="M10 1.5 L12.6 5 H7.4Z M10 18.5 L12.6 15 H7.4Z M1.5 10 L5 7.4 V12.6Z M18.5 10 L15 7.4 V12.6Z" fill="#d9d9d9"/></svg>
<svg style="left:28.5px;top:48.5px;" width="3.5" height="3.5" viewBox="0 0 3.5 3.5"><path d="M3.5 0 L3.5 3.5 L0 3.5Z" fill="#c4c4c4"/></svg>
<svg style="left:8.5px;top:56px;" width="20" height="20" viewBox="0 0 20 20"><rect x="2.2" y="3.5" width="16" height="13" fill="none" stroke="#d9d9d9" stroke-width="1.5" stroke-dasharray="3.2 2"/></svg>
<svg style="left:28.5px;top:73.5px;" width="3.5" height="3.5" viewBox="0 0 3.5 3.5"><path d="M3.5 0 L3.5 3.5 L0 3.5Z" fill="#c4c4c4"/></svg>
<svg style="left:8.5px;top:82px;" width="20" height="20" viewBox="0 0 20 20"><path d="M3 5 L9 10.5 L16.5 3.5 L15.5 12 L9.5 13.5 L7 16.5 M9.5 13.5 L3 5 M5.5 17.5 L8.5 14.5 M7.5 18 L9.5 15.5" fill="none" stroke="#d9d9d9" stroke-width="1.2" stroke-linecap="round" stroke-linejoin="round"/></svg>
<svg style="left:28.5px;top:99.5px;" width="3.5" height="3.5" viewBox="0 0 3.5 3.5"><path d="M3.5 0 L3.5 3.5 L0 3.5Z" fill="#c4c4c4"/></svg>
<svg style="left:8.5px;top:107px;" width="20" height="20" viewBox="0 0 20 20"><path d="M3 17 L11.5 8.5" fill="none" stroke="#d9d9d9" stroke-width="3" stroke-linecap="round"/><path d="M10 7 L13 10" stroke="#535353" stroke-width="1"/><path d="M14 1.5 v4 M12 3.5 h4 M7.5 2.5 v3 M6 4 h3 M16 8.5 v3 M14.5 10 h3" fill="none" stroke="#d9d9d9" stroke-width="1.2" stroke-linecap="round" stroke-linejoin="round"/></svg>
<svg style="left:28.5px;top:124.5px;" width="3.5" height="3.5" viewBox="0 0 3.5 3.5"><path d="M3.5 0 L3.5 3.5 L0 3.5Z" fill="#c4c4c4"/></svg>
<svg style="left:8.5px;top:133px;" width="20" height="20" viewBox="0 0 20 20"><path d="M5.5 1.5 V14.5 H18.5 M1.5 5.5 H14.5 V18.5" fill="none" stroke="#d9d9d9" stroke-width="1.8"/></svg>
<svg style="left:28.5px;top:150.5px;" width="3.5" height="3.5" viewBox="0 0 3.5 3.5"><path d="M3.5 0 L3.5 3.5 L0 3.5Z" fill="#c4c4c4"/></svg>
<svg style="left:8.5px;top:158px;" width="20" height="20" viewBox="0 0 20 20"><rect x="3" y="3.5" width="14" height="13" fill="none" stroke="#d9d9d9" stroke-width="1.5" stroke-linecap="round" stroke-linejoin="round"/><path d="M3 3.5 L17 16.5 M17 3.5 L3 16.5" fill="none" stroke="#d9d9d9" stroke-width="1.2" stroke-linecap="round" stroke-linejoin="round"/></svg>
<svg style="left:8.5px;top:184px;" width="20" height="20" viewBox="0 0 20 20"><path d="M3 17 L4 13.5 L10.5 7 L13 9.5 L6.5 16Z" fill="none" stroke="#d9d9d9" stroke-width="1.2" stroke-linecap="round" stroke-linejoin="round"/><path d="M10 5 L15 10 M11.5 7.5 L15 3 Q16.8 1.8 17.8 3.2 Q18.6 4.4 17 6 L13.5 9.3" fill="#d9d9d9" stroke="#d9d9d9" stroke-width="1.6" stroke-linecap="round"/></svg>
<svg style="left:28.5px;top:201.5px;" width="3.5" height="3.5" viewBox="0 0 3.5 3.5"><path d="M3.5 0 L3.5 3.5 L0 3.5Z" fill="#c4c4c4"/></svg>
<svg style="left:8.5px;top:209px;" width="20" height="20" viewBox="0 0 20 20"><path d="M4 15 L13.5 5.5 Q15.5 3.8 17.2 5.5 Q18.8 7.2 17 9 L7.5 18.5 Q5.8 20 4 18.3 Q2.5 16.6 4 15Z" fill="#d9d9d9"/><path d="M9 10.5 l1 1 M11 12.5 l1 1 M11 9 l1 1 M8.5 13 l1 1" stroke="#535353" stroke-width="1.1"/><circle cx="6.5" cy="6.5" r="5" fill="none" stroke="#d9d9d9" stroke-width="1.1" stroke-dasharray="2 1.6"/></svg>
<svg style="left:28.5px;top:226.5px;" width="3.5" height="3.5" viewBox="0 0 3.5 3.5"><path d="M3.5 0 L3.5 3.5 L0 3.5Z" fill="#c4c4c4"/></svg>
<svg style="left:8.5px;top:235px;" width="20" height="20" viewBox="0 0 20 20"><path d="M17 2.2 Q18.3 2.6 17.8 4 L10.5 13 L8 11 L15.5 2.8 Q16.3 2 17 2.2Z" fill="#d9d9d9"/><path d="M7 12 Q9 12.3 9.6 14 Q9.8 16.5 7 17.3 Q4.5 18 2.5 17.5 Q4.3 16.5 4.5 14.5 Q5 12.3 7 12Z" fill="#d9d9d9"/></svg>
<svg style="left:28.5px;top:252.5px;" width="3.5" height="3.5" viewBox="0 0 3.5 3.5"><path d="M3.5 0 L3.5 3.5 L0 3.5Z" fill="#c4c4c4"/></svg>
<svg style="left:8.5px;top:260px;" width="20" height="20" viewBox="0 0 20 20"><path d="M10 2 Q13 2 13 5 Q13 6.8 11.8 8 Q11.3 9 11.5 11 H16 Q17 11 17 12 V14 H3 V12 Q3 11 4 11 H8.5 Q8.7 9 8.2 8 Q7 6.8 7 5 Q7 2 10 2Z" fill="#d9d9d9"/><path d="M3.5 16.5 H16.5" fill="none" stroke="#d9d9d9" stroke-width="1.5" stroke-linecap="round" stroke-linejoin="round"/></svg>
<svg style="left:28.5px;top:277.5px;" width="3.5" height="3.5" viewBox="0 0 3.5 3.5"><path d="M3.5 0 L3.5 3.5 L0 3.5Z" fill="#c4c4c4"/></svg>
<svg style="left:8.5px;top:286px;" width="20" height="20" viewBox="0 0 20 20"><path d="M17.3 2.2 Q18.5 2.7 18 4 L11.5 12.5 L9.3 10.7 L16 2.8 Q16.6 2 17.3 2.2Z" fill="#d9d9d9"/><path d="M8.3 11.8 Q10 12.2 10.4 13.6 Q10.6 15.8 8.2 16.6 Q6 17.2 4.2 16.8 Q5.8 15.8 6 14 Q6.5 12 8.3 11.8Z" fill="#d9d9d9"/><path d="M2 8 Q4.5 3.5 9.5 4.5" fill="none" stroke="#d9d9d9" stroke-width="1.2" stroke-linecap="round" stroke-linejoin="round"/><path d="M1 5.5 L2.2 8.8 L5.2 7.2Z" fill="#d9d9d9"/><path d="M12 16 Q14.5 15 15.5 12" fill="none" stroke="#d9d9d9" stroke-width="1" stroke-dasharray="1.5 1.3"/></svg>
<svg style="left:28.5px;top:303.5px;" width="3.5" height="3.5" viewBox="0 0 3.5 3.5"><path d="M3.5 0 L3.5 3.5 L0 3.5Z" fill="#c4c4c4"/></svg>
<svg style="left:8.5px;top:311px;" width="20" height="20" viewBox="0 0 20 20"><path d="M2.5 12.5 L11 4 Q12 3.2 13 4 L16.5 7.5 Q17.3 8.5 16.5 9.5 L9.5 16.5 H5.5Z" fill="#d9d9d9"/><path d="M4.2 12.2 L8.5 16.3" stroke="#535353" stroke-width="1.1"/><path d="M6.5 13.5 L9.5 10.5 L11 12 L8 15Z" fill="#535353"/><path d="M9 17 H17.5" fill="none" stroke="#d9d9d9" stroke-width="1.2" stroke-linecap="round" stroke-linejoin="round"/></svg>
<svg style="left:28.5px;top:328.5px;" width="3.5" height="3.5" viewBox="0 0 3.5 3.5"><path d="M3.5 0 L3.5 3.5 L0 3.5Z" fill="#c4c4c4"/></svg>
<svg style="left:8.5px;top:336px;" width="20" height="20" viewBox="0 0 20 20"><defs><linearGradient id="tg" x1="0" y1="0" x2="1" y2="1"><stop offset="0" stop-color="#d9d9d9"/><stop offset="1" stop-color="#3a3a3a"/></linearGradient></defs><rect x="2.5" y="3.5" width="15" height="13" fill="url(#tg)" stroke="#d9d9d9" stroke-width="1.4"/></svg>
<svg style="left:28.5px;top:353.5px;" width="3.5" height="3.5" viewBox="0 0 3.5 3.5"><path d="M3.5 0 L3.5 3.5 L0 3.5Z" fill="#c4c4c4"/></svg>
<svg style="left:8.5px;top:362px;" width="20" height="20" viewBox="0 0 20 20"><path d="M10 2.5 Q11 6 13.5 9.5 Q15.3 12.5 14 15 Q12.8 17.5 10 17.5 Q7.2 17.5 6 15 Q4.7 12.5 6.5 9.5 Q9 6 10 2.5Z" fill="#d9d9d9"/></svg>
<svg style="left:28.5px;top:379.5px;" width="3.5" height="3.5" viewBox="0 0 3.5 3.5"><path d="M3.5 0 L3.5 3.5 L0 3.5Z" fill="#c4c4c4"/></svg>
<svg style="left:8.5px;top:387px;" width="20" height="20" viewBox="0 0 20 20"><path d="M16.3 1.7 Q17.5 2.2 17 3.5 L10 12 L7.8 10.2 L15 2.3 Q15.6 1.5 16.3 1.7Z" fill="#d9d9d9"/><path d="M6.8 11.3 Q8.5 11.7 8.9 13.1 Q9.1 15.3 6.7 16.1 Q4.5 16.7 2.7 16.3 Q4.3 15.3 4.5 13.5 Q5 11.5 6.8 11.3Z" fill="#d9d9d9"/><circle cx="14.5" cy="14" r="3.6" fill="#d9d9d9"/><path d="M12 16.5 L17 11.5" stroke="#535353" stroke-width="1.2"/></svg>
<svg style="left:28.5px;top:404.5px;" width="3.5" height="3.5" viewBox="0 0 3.5 3.5"><path d="M3.5 0 L3.5 3.5 L0 3.5Z" fill="#c4c4c4"/></svg>
<svg style="left:8.5px;top:413px;" width="20" height="20" viewBox="0 0 20 20"><circle cx="12.5" cy="7.5" r="5" fill="#d9d9d9"/><path d="M8.5 11.5 L3 17" fill="none" stroke="#d9d9d9" stroke-width="2.2" stroke-linecap="round"/></svg>
<svg style="left:28.5px;top:430.5px;" width="3.5" height="3.5" viewBox="0 0 3.5 3.5"><path d="M3.5 0 L3.5 3.5 L0 3.5Z" fill="#c4c4c4"/></svg>
<svg style="left:8.5px;top:439px;" width="20" height="20" viewBox="0 0 20 20"><path d="M3 18 L5 10 L11 4.5 L16.5 10 L11 15.5 L3 18Z M3 18 L9 11.5" fill="none" stroke="#d9d9d9" stroke-width="1.2" stroke-linecap="round" stroke-linejoin="round"/><circle cx="10" cy="10.8" r="1.5" fill="none" stroke="#d9d9d9" stroke-width="1"/><path d="M11.5 3.5 L13.5 1.8 L19 7.5 L17 9.2Z" fill="none" stroke="#d9d9d9" stroke-width="1.2" stroke-linecap="round" stroke-linejoin="round"/></svg>
<svg style="left:28.5px;top:456.5px;" width="3.5" height="3.5" viewBox="0 0 3.5 3.5"><path d="M3.5 0 L3.5 3.5 L0 3.5Z" fill="#c4c4c4"/></svg>
<div class="t" style="left:10px;top:463px;font-family:'Liberation Serif',serif;font-weight:bold;font-size:22px;color:#d9d9d9;">T</div>
<svg style="left:28px;top:481px;" width="4" height="4" viewBox="0 0 4 4"><path d="M4 0 L4 4 L0 4Z" fill="#d9d9d9"/></svg>
<svg style="left:8.5px;top:489px;" width="20" height="20" viewBox="0 0 20 20"><path d="M5.5 2 L5.5 16 L9 12.8 L11.5 18 L13.8 17 L11.3 11.8 L16 11.5Z" fill="#1a1a1a" stroke="#d9d9d9" stroke-width="1.1" stroke-linejoin="round"/></svg>
<svg style="left:28.5px;top:506.5px;" width="3.5" height="3.5" viewBox="0 0 3.5 3.5"><path d="M3.5 0 L3.5 3.5 L0 3.5Z" fill="#c4c4c4"/></svg>
<svg style="left:8.5px;top:514px;" width="20" height="20" viewBox="0 0 20 20"><rect x="2" y="4" width="16" height="12.5" fill="#7a7a7a" stroke="#d9d9d9" stroke-width="1.4"/></svg>
<svg style="left:28.5px;top:531.5px;" width="3.5" height="3.5" viewBox="0 0 3.5 3.5"><path d="M3.5 0 L3.5 3.5 L0 3.5Z" fill="#c4c4c4"/></svg>
<svg style="left:8.5px;top:540px;" width="20" height="20" viewBox="0 0 20 20"><path d="M6 10.5 V5 Q6 3.8 7 3.8 Q8 3.8 8 5 V3.5 Q8 2.3 9.1 2.3 Q10.2 2.3 10.2 3.5 V4.3 Q10.2 3.2 11.3 3.2 Q12.4 3.2 12.4 4.4 V5.6 Q12.5 4.6 13.5 4.6 Q14.5 4.6 14.5 5.8 V12.5 Q14.5 17.5 10.5 17.8 Q7.5 18 5.8 15.2 L2.8 10.6 Q2.3 9.6 3.2 9.1 Q4 8.7 4.8 9.5Z" fill="#d9d9d9"/><path d="M8 5 V10 M10.2 4.3 V10 M12.4 5.6 V10" stroke="#535353" stroke-width=".9"/></svg>
<svg style="left:28.5px;top:557.5px;" width="3.5" height="3.5" viewBox="0 0 3.5 3.5"><path d="M3.5 0 L3.5 3.5 L0 3.5Z" fill="#c4c4c4"/></svg>
<svg style="left:8.5px;top:566px;" width="20" height="20" viewBox="0 0 20 20"><circle cx="8" cy="8" r="5.3" fill="none" stroke="#d9d9d9" stroke-width="1.8"/><path d="M12 12 L17.5 17.5" fill="none" stroke="#d9d9d9" stroke-width="2.4" stroke-linecap="round"/></svg>
<svg style="left:8.5px;top:591px;" width="20" height="20" viewBox="0 0 20 20"><circle cx="4.3" cy="10" r="1.9" fill="#d9d9d9"/><circle cx="10" cy="10" r="1.9" fill="#d9d9d9"/><circle cx="15.7" cy="10" r="1.9" fill="#d9d9d9"/></svg>
<svg style="left:28.5px;top:608.5px;" width="3.5" height="3.5" viewBox="0 0 3.5 3.5"><path d="M3.5 0 L3.5 3.5 L0 3.5Z" fill="#c4c4c4"/></svg>
<div class="a" style="left:3px;top:618px;width:8px;height:8px;background:#000;border:1px solid #e8e8e8;"></div>
<div class="a" style="left:7px;top:623px;width:7px;height:7px;background:#fff;border:1px solid #222;"></div>
<svg style="left:23px;top:618px;" width="11" height="12" viewBox="0 0 11 12"><path d="M3 3 Q8 3 8 8.5" fill="none" stroke="#d9d9d9" stroke-width="1.6"/><path d="M0 3 L4 0 V6Z M8 12 L5 8 H11Z" fill="#d9d9d9"/></svg>
<div class="a" style="left:15px;top:645.5px;width:17.5px;height:17px;background:#fff;box-shadow:0 0 0 1px #3a3a3a;"></div>
<div class="a" style="left:5.5px;top:636.2px;width:17px;height:16px;background:#4dd4e4;box-shadow:0 0 0 1px #e6e6e6,0 0 0 2px #3a3a3a;"></div>
<svg style="left:10px;top:674.5px;" width="16.5" height="12.5" viewBox="0 0 18 13"><rect x=".7" y=".7" width="16.6" height="11.6" fill="none" stroke="#d9d9d9" stroke-width="1.3"/><circle cx="9" cy="6.5" r="3.6" fill="none" stroke="#d9d9d9" stroke-width="1" stroke-dasharray="1.3 1"/></svg>
<svg style="left:10px;top:700px;" width="17" height="13.5" viewBox="0 0 19 15"><rect x="5.5" y=".8" width="12.5" height="9" fill="#535353" stroke="#d9d9d9" stroke-width="1.4"/><rect x=".8" y="4.5" width="12" height="9" fill="#535353" stroke="#d9d9d9" stroke-width="1.4"/></svg>
<svg style="left:28px;top:711px;" width="4" height="4" viewBox="0 0 4 4"><path d="M4 0 L4 4 L0 4Z" fill="#d9d9d9"/></svg>
<svg style="left:10px;top:727px;" width="20" height="18" viewBox="0 0 20 18"><path d="M7 13 Q2 12 3 7 Q4 3 8.5 3.5" fill="none" stroke="#d9d9d9" stroke-width="1.2" stroke-linecap="round" stroke-linejoin="round"/><path d="M7.5 1 L10.5 4 L6.8 6Z" fill="#d9d9d9"/><rect x="8" y="8.5" width="9.5" height="7.5" fill="none" stroke="#d9d9d9" stroke-width="1.3"/><path d="M9 15 L11.5 12 L13.5 14 L15 12.8 L16.8 15Z" fill="#d9d9d9"/><circle cx="15.5" cy="3.5" r="3" fill="#3b8bff"/></svg>


<div class="a" id="rgap"></div>
<div class="a" id="iconcol"></div>
<div class="a" id="rpanel"></div>
<div class="a" style="left:1477px;top:0px;width:36px;height:11px;background:#474747;"></div>
<div class="a" style="left:1516px;top:0px;width:364px;height:11px;background:#474747;"></div>
<svg style="left:1500px;top:3px;" width="10" height="7" viewBox="0 0 10 7"><path d="M4 0.5 L1 3.5 L4 6.5 M8.5 0.5 L5.5 3.5 L8.5 6.5" fill="none" stroke="#d9d9d9" stroke-width="1.3"/></svg>
<svg style="left:1866px;top:3px;" width="10" height="7" viewBox="0 0 10 7"><path d="M1 0.5 L4 3.5 L1 6.5 M5.5 0.5 L8.5 3.5 L5.5 6.5" fill="none" stroke="#d9d9d9" stroke-width="1.3"/></svg>
<div class="a" style="left:1477px;top:78px;width:36px;height:2px;background:#404040;"></div>
<div class="a" style="left:1477px;top:146px;width:36px;height:2px;background:#404040;"></div>
<div class="a" style="left:1477px;top:214px;width:36px;height:2px;background:#404040;"></div>
<div class="a" style="left:1485px;top:17px;width:20px;height:4px;background:repeating-linear-gradient(90deg,#4c4c4c 0 1px,transparent 1px 2px);"></div>
<div class="a" style="left:1485px;top:85px;width:20px;height:4px;background:repeating-linear-gradient(90deg,#4c4c4c 0 1px,transparent 1px 2px);"></div>
<div class="a" style="left:1485px;top:153px;width:20px;height:4px;background:repeating-linear-gradient(90deg,#4c4c4c 0 1px,transparent 1px 2px);"></div>
<svg style="left:1485.0px;top:23.5px;" width="20" height="21" viewBox="0 0 20 21"><rect x="3" y="2.5" width="4" height="4" fill="none" stroke="#d9d9d9" stroke-width="1.2" stroke-linecap="round" stroke-linejoin="round"/><rect x="3" y="8.5" width="4" height="4" fill="none" stroke="#d9d9d9" stroke-width="1.2" stroke-linecap="round" stroke-linejoin="round"/><rect x="2.5" y="14" width="5" height="5" fill="#d9d9d9"/><path d="M11.5 17.5 Q18.5 12 13.5 4.5" fill="none" stroke="#d9d9d9" stroke-width="1.7"/><path d="M10 4.2 L15.8 2.2 L14.6 8Z" fill="#d9d9d9"/></svg>
<svg style="left:1485.0px;top:51.0px;" width="20" height="20" viewBox="0 0 20 20"><path d="M3.5 3.5 H16.5 Q17.5 3.5 17.5 4.5 V12 Q17.5 13 16.5 13 H10 L5.5 17 V13 H3.5 Q2.5 13 2.5 12 V4.5 Q2.5 3.5 3.5 3.5Z" fill="#d9d9d9"/></svg>
<svg style="left:1485.0px;top:91.0px;" width="20" height="20" viewBox="0 0 20 20"><path d="M1 3 h1.5 M4 3 h3 M1 6 h1.5 M4 6 h3 M1 9 h1.5 M4 9 h3" stroke="#d9d9d9" stroke-width="1.2" fill="none"/><path d="M18 3.2 Q19.2 3.7 18.7 5 L12 13 L9.8 11.2 L16.7 3.8 Q17.3 3 18 3.2Z" fill="#d9d9d9"/><path d="M8.8 12.3 Q10.5 12.7 10.9 14.1 Q11.1 16.3 8.7 17.1 Q6.5 17.7 4.7 17.3 Q6.3 16.3 6.5 14.5 Q7 12.5 8.8 12.3Z" fill="#d9d9d9"/></svg>
<svg style="left:1485.0px;top:118.0px;" width="20" height="20" viewBox="0 0 20 20"><path d="M1.5 6 H17.5 M1.5 14.5 H17.5" fill="none" stroke="#d9d9d9" stroke-width="1.6"/><path d="M2 6 Q3 3 6 3.5 Q8.5 4.5 8.5 6 Q8.5 7.5 6 8.5 Q3 9 2 6Z" fill="#d9d9d9"/><path d="M18.5 10.5 V18.5 L11 14.5Z" fill="#d9d9d9"/></svg>
<div class="t" style="left:1487.5px;top:159px;font-size:19px;color:#d9d9d9;-webkit-text-stroke:.3px #d9d9d9;">A</div>
<div class="a" style="left:1501.3px;top:160.5px;width:1.2px;height:17.5px;background:#d9d9d9;"></div>
<div class="t" style="left:1489.5px;top:188.5px;font-size:17px;font-weight:bold;color:#d9d9d9;">¶</div>
<div class="a" style="left:1516px;top:13px;width:364px;height:27px;background:#424242;"></div>
<div class="a" style="left:1516px;top:13px;width:41px;height:27px;background:#535353;"></div>
<div class="a" style="left:1557px;top:13px;width:1px;height:26px;background:#383838;"></div>
<div class="a" style="left:1613px;top:13px;width:1px;height:26px;background:#383838;"></div>
<div class="a" style="left:1677px;top:13px;width:1px;height:26px;background:#383838;"></div>
<div class="a" style="left:1733px;top:13px;width:1px;height:26px;background:#383838;"></div>
<div class="a" style="left:1558px;top:13px;width:175px;height:26px;background:#474747;"></div>
<div class="a" style="left:1613px;top:13px;width:1px;height:26px;background:#383838;"></div>
<div class="a" style="left:1677px;top:13px;width:1px;height:26px;background:#383838;"></div>
<div class="t " style="left:1524.4px;top:20.1px;font-size:10px;color:#f0f0f0;font-weight:bold;letter-spacing:0.18px;">Color</div>
<div class="t " style="left:1565.6px;top:20.1px;font-size:10px;color:#b4b4b4;font-weight:bold;letter-spacing:-0.39px;">Swatches</div>
<div class="t " style="left:1625.4px;top:20.1px;font-size:10px;color:#b4b4b4;font-weight:bold;letter-spacing:-0.19px;">Gradients</div>
<div class="t " style="left:1687.0px;top:20.1px;font-size:10px;color:#b4b4b4;font-weight:bold;letter-spacing:-0.13px;">Patterns</div>
<svg style="left:1864px;top:21px;" width="10" height="8" viewBox="0 0 10 8"><path d="M0 .5 H10 M0 2.8 H10 M0 5.1 H10 M0 7.4 H10" stroke="#b0b0b0" stroke-width="1.1"/></svg>
<div class="a" style="left:1535px;top:60px;width:18px;height:18px;background:#fff;box-shadow:0 0 0 1px #3c3c3c;"></div>
<div class="a" style="left:1526px;top:51px;width:17px;height:17px;background:#4dd4e4;box-shadow:0 0 0 1px #f0f0f0,0 0 0 2px #6a6a6a,0 0 0 3px #3c3c3c;"></div>
<svg style="left:1523px;top:94px;" width="12" height="12" viewBox="0 0 12 12"><path d="M6 .8 L11.5 11 H.5Z" fill="#e0e0e0"/><path d="M6 4 V8" stroke="#3a3a3a" stroke-width="1.4"/><circle cx="6" cy="9.6" r=".8" fill="#3a3a3a"/></svg>
<div class="a" style="left:1540px;top:97px;width:10px;height:9px;background:#5cc8de;box-shadow:0 0 0 1px #c8c8c8;"></div>
<div class="a" style="left:1560px;top:46.5px;width:268px;height:74.5px;background:linear-gradient(to bottom,rgba(0,0,0,0),#000),linear-gradient(to right,#fff,#00e1ff);"></div>
<svg style="left:1730px;top:48px;" width="12" height="12" viewBox="0 0 12 12"><circle cx="6" cy="6" r="4.6" fill="none" stroke="#0d2a33" stroke-width="1.3"/></svg>
<div class="a" style="left:1845px;top:46.5px;width:19px;height:75px;background:linear-gradient(to bottom,#ff0000 0%,#ff00ff 16%,#0000ff 33%,#00ffff 50%,#00ff00 66%,#ffff00 83%,#ff0000 100%);"></div>
<svg style="left:1835px;top:78px;" width="7" height="9" viewBox="0 0 7 9"><path d="M0 1.5 Q0 0 1.5 .6 L6.5 4 Q7 4.5 6.5 5 L1.5 8.4 Q0 9 0 7.5Z" fill="#e6e6e6"/></svg>
<div class="a" style="left:1516px;top:141.5px;width:364px;height:3.5px;background:#3e3e3e;"></div>
<div class="a" style="left:1516px;top:145px;width:364px;height:27px;background:#424242;"></div>
<div class="a" style="left:1516px;top:145px;width:64px;height:27px;background:#535353;"></div>
<div class="a" style="left:1581px;top:145px;width:132px;height:26px;background:#474747;"></div>
<div class="a" style="left:1580px;top:145px;width:1px;height:26px;background:#383838;"></div>
<div class="a" style="left:1655px;top:145px;width:1px;height:26px;background:#383838;"></div>
<div class="a" style="left:1713px;top:145px;width:1px;height:26px;background:#383838;"></div>
<div class="t " style="left:1524.4px;top:152.3px;font-size:10px;color:#f0f0f0;font-weight:bold;letter-spacing:-0.15px;">Properties</div>
<div class="t " style="left:1589.0px;top:152.3px;font-size:10px;color:#b4b4b4;font-weight:bold;letter-spacing:-0.23px;">Adjustments</div>
<div class="t " style="left:1664.5px;top:152.3px;font-size:10px;color:#b4b4b4;font-weight:bold;letter-spacing:-0.36px;">Libraries</div>
<svg style="left:1864px;top:153px;" width="10" height="8" viewBox="0 0 10 8"><path d="M0 .5 H10 M0 2.8 H10 M0 5.1 H10 M0 7.4 H10" stroke="#b0b0b0" stroke-width="1.1"/></svg>
<div class="a" style="left:1526.5px;top:178px;width:21.5px;height:21.5px;background:#3a3a3a;box-shadow:0 0 0 1px #484848;"></div>
<svg style="left:1531px;top:182px;" width="12" height="14" viewBox="0 0 12 14"><path d="M1 .8 H7.5 L11 4.3 V13.2 H1Z M7.3 .8 V4.5 H11" fill="none" stroke="#d9d9d9" stroke-width="1.3" stroke-linejoin="round"/></svg>
<div class="t " style="left:1554.0px;top:185.8px;font-size:10px;color:#cfcfcf;letter-spacing:-0.07px;">Document</div>
<div class="a" style="left:1516px;top:205px;width:349px;height:1px;background:#464646;"></div>
<svg style="left:1522px;top:216px;" width="10" height="7" viewBox="0 0 10 7"><path d="M1 1 L5 5.5 L9 1" fill="none" stroke="#bdbdbd" stroke-width="1.2"/></svg>
<div class="t " style="left:1537.0px;top:215.8px;font-size:10px;color:#e2e2e2;font-weight:bold;letter-spacing:-0.10px;">Canvas</div>
<div class="t " style="left:1566.5px;top:239.8px;font-size:10px;color:#c8c8c8;">W</div>
<div class="a" style="left:1581.5px;top:236px;width:52.5px;height:16.5px;background:#3e3e3e;box-shadow:0 0 0 1px #6b6b6b;"></div>
<div class="t " style="left:1586.5px;top:239.9px;font-size:10px;color:#e6e6e6;">1200 px</div>
<div class="t " style="left:1648.0px;top:239.8px;font-size:10px;color:#c8c8c8;">X</div>
<div class="a" style="left:1662px;top:236px;width:51px;height:16.5px;background:#4d4d4d;box-shadow:0 0 0 1px #5c5c5c;"></div>
<div class="t " style="left:1667.0px;top:239.9px;font-size:10px;color:#686868;">0 px</div>
<div class="t " style="left:1568.5px;top:264.1px;font-size:10px;color:#c8c8c8;">H</div>
<div class="a" style="left:1581.5px;top:260.2px;width:52.5px;height:16.5px;background:#3e3e3e;box-shadow:0 0 0 1px #6b6b6b;"></div>
<div class="t " style="left:1586.5px;top:264.1px;font-size:10px;color:#e6e6e6;">800 px</div>
<div class="t " style="left:1648.0px;top:264.1px;font-size:10px;color:#c8c8c8;">Y</div>
<div class="a" style="left:1662px;top:260.2px;width:51px;height:16.5px;background:#4d4d4d;box-shadow:0 0 0 1px #5c5c5c;"></div>
<div class="t " style="left:1667.0px;top:264.1px;font-size:10px;color:#686868;">0 px</div>
<svg style="left:1533px;top:248px;" width="10" height="16" viewBox="0 0 10 16"><path d="M5 6.2 V9.8" stroke="#d9d9d9" stroke-width="1.3"/><rect x="2" y="1" width="6" height="6" rx="3" fill="none" stroke="#d9d9d9" stroke-width="1.4"/><rect x="2" y="9" width="6" height="6" rx="3" fill="none" stroke="#d9d9d9" stroke-width="1.4"/></svg>
<div class="a" style="left:1608px;top:288px;width:23px;height:22.5px;background:#343434;"></div>
<svg style="left:1586.5px;top:291.5px;" width="15" height="16" viewBox="0 0 15 16"><rect x=".7" y=".7" width="13.3" height="14.6" fill="none" stroke="#d9d9d9" stroke-width="1.3"/><circle cx="7.3" cy="5" r="2" fill="#d9d9d9"/><path d="M3.8 15 V9.5 Q3.8 8 5.3 8 H9.3 Q10.8 8 10.8 9.5 V15Z" fill="#d9d9d9"/></svg>
<svg style="left:1611.5px;top:293.5px;" width="16" height="12" viewBox="0 0 16 12"><rect x=".7" y=".7" width="14.6" height="10.6" fill="none" stroke="#d9d9d9" stroke-width="1.3"/><circle cx="8" cy="4" r="1.8" fill="#d9d9d9"/><path d="M4.5 11 V8 Q4.5 6.6 6 6.6 H10 Q11.5 6.6 11.5 8 V11Z" fill="#d9d9d9"/></svg>
<div class="t " style="left:1582.0px;top:323.8px;font-size:10px;color:#cfcfcf;letter-spacing:-0.13px;">Resolution: 240 pixels/inch</div>
<div class="t " style="left:1551.0px;top:348.3px;font-size:10px;color:#c8c8c8;letter-spacing:-0.25px;">Mode</div>
<div class="a" style="left:1582px;top:344.5px;width:130px;height:22px;background:#3a3a3a;box-shadow:0 0 0 1px #666;border-radius:2px;"></div>
<div class="t " style="left:1590.0px;top:350.3px;font-size:10px;color:#e6e6e6;letter-spacing:-0.60px;">RGB Color</div>
<svg style="left:1700px;top:352px;" width="9" height="6" viewBox="0 0 9 6"><path d="M1 1 L4.5 4.5 L8 1" fill="none" stroke="#c8c8c8" stroke-width="1.2"/></svg>
<div class="a" style="left:1865px;top:206px;width:12px;height:268px;background:#4a4a4a;"></div>
<svg style="left:1867px;top:212px;" width="8" height="6" viewBox="0 0 8 6"><path d="M1 5 L4 1.5 L7 5" fill="none" stroke="#8a8a8a" stroke-width="1.1"/></svg>
<div class="a" style="left:1866px;top:223px;width:11px;height:146px;background:#6a6a6a;"></div>
<svg style="left:1867px;top:464px;" width="8" height="6" viewBox="0 0 8 6"><path d="M1 1 L4 4.5 L7 1" fill="none" stroke="#8a8a8a" stroke-width="1.1"/></svg>
<div class="a" style="left:1812px;top:423px;width:53px;height:1px;background:#464646;"></div>
<div class="a" style="left:1516px;top:477px;width:364px;height:25px;background:#4b4b4b;"></div>
<div class="a" style="left:1516px;top:502px;width:364px;height:30px;background:#424242;"></div>
<svg style="left:1864px;top:514.5px;" width="10" height="8" viewBox="0 0 10 8"><path d="M0 .5 H10 M0 2.8 H10 M0 5.1 H10 M0 7.4 H10" stroke="#b0b0b0" stroke-width="1.1"/></svg>
<div class="a" style="left:1516px;top:532px;width:364px;height:58px;background:#525252;"></div>
<div class="a" style="left:1516px;top:532px;width:364px;height:1px;background:#444444;"></div>
<div class="a" style="left:1516px;top:562px;width:364px;height:1px;background:#444444;"></div>
<div class="a" style="left:1516px;top:590px;width:364px;height:1px;background:#444444;"></div>
<div class="a" style="left:1516px;top:591px;width:364px;height:309px;background:#4d4d4d;"></div>
<div class="a" style="left:1812px;top:620px;width:51px;height:29px;background:#5e5e5e;"></div>
<svg style="left:1838px;top:629.5px;" width="10" height="12" viewBox="0 0 10 12"><rect x=".8" y="4.8" width="8.4" height="6.4" fill="none" stroke="#d9d9d9" stroke-width="1.3"/><path d="M2.8 4.8 V3 Q2.8 .8 5 .8 Q7.2 .8 7.2 3 V4.8" fill="none" stroke="#d9d9d9" stroke-width="1.3"/><rect x="4.3" y="7" width="1.4" height="2" fill="#d9d9d9"/></svg>
<div class="a" style="left:1863px;top:591px;width:17px;height:309px;background:#4a4a4a;"></div>
<div class="a" style="left:1877px;top:13px;width:3px;height:887px;background:#424242;"></div>


<!-- ================= DIALOG ================= -->
<div class="a" id="dlg"></div>
<div class="a" style="left:460px;top:54px;width:16px;height:15.5px;background:#001e36;border-radius:3px;"></div>
<div class="t" style="left:462.5px;top:57px;font-size:9.5px;font-weight:bold;color:#31a8ff;letter-spacing:-0.3px;">Ps</div>
<div class="t " style="left:481.0px;top:56.9px;font-size:12px;color:#1a1a1a;letter-spacing:-0.52px;">Save a Copy</div>
<svg style="left:1360px;top:56.5px;" width="10" height="10" viewBox="0 0 10 10"><path d="M0 0 L10 10 M10 0 L0 10" stroke="#222" stroke-width="1.1"/></svg>
<svg style="left:465px;top:88.5px;" width="12" height="10" viewBox="0 0 12 10"><path d="M11.5 5 H1 M5 1 L1 5 L5 9" fill="none" stroke="#cfcfcf" stroke-width="1.2"/></svg>
<svg style="left:493px;top:88.5px;" width="12" height="10" viewBox="0 0 12 10"><path d="M.5 5 H11 M7 1 L11 5 L7 9" fill="none" stroke="#cfcfcf" stroke-width="1.2"/></svg>
<svg style="left:520px;top:92px;" width="7" height="4" viewBox="0 0 7 4"><path d="M.5 .5 L3.5 3.5 L6.5 .5" fill="none" stroke="#cfcfcf" stroke-width="1"/></svg>
<svg style="left:537px;top:87.5px;" width="12" height="12" viewBox="0 0 12 12"><path d="M6 11.5 V1 M1.5 5.5 L6 1 L10.5 5.5" fill="none" stroke="#555" stroke-width="1.3"/></svg>
<div class="a" style="left:556px;top:83px;width:602px;height:21px;background:#fff;border:1px solid #dedede;box-sizing:border-box;"></div>
<div class="a" style="left:1138px;top:84px;width:1px;height:19px;background:#e3e3e3;"></div>
<svg style="left:561px;top:85.5px;" width="12.5" height="15" viewBox="0 0 13 16"><path d="M.5 1.5 Q.5 .5 1.5 .5 H10.5 Q12.5 .8 12.5 3 V15.5 H.5Z" fill="#ffe8a0"/><path d="M9.5 .5 H10.5 Q12.5 .8 12.5 3 V15.5 H9.5Z" fill="#f5cf63"/><path d="M.5 14 H12.5 V15.5 H.5Z" fill="#f0c85a"/></svg>
<svg style="left:582px;top:90px;" width="5" height="7" viewBox="0 0 5 7"><path d="M1 .5 L4 3.5 L1 6.5" fill="none" stroke="#555" stroke-width="1.1"/></svg>
<svg style="left:644px;top:90px;" width="5" height="7" viewBox="0 0 5 7"><path d="M1 .5 L4 3.5 L1 6.5" fill="none" stroke="#555" stroke-width="1.1"/></svg>
<svg style="left:725px;top:90px;" width="5" height="7" viewBox="0 0 5 7"><path d="M1 .5 L4 3.5 L1 6.5" fill="none" stroke="#555" stroke-width="1.1"/></svg>
<svg style="left:868px;top:90px;" width="5" height="7" viewBox="0 0 5 7"><path d="M1 .5 L4 3.5 L1 6.5" fill="none" stroke="#555" stroke-width="1.1"/></svg>
<div class="t " style="left:595.0px;top:87.9px;font-size:12px;color:#1a1a1a;letter-spacing:-0.43px;">Deze pc</div>
<div class="t " style="left:658.0px;top:87.9px;font-size:12px;color:#1a1a1a;letter-spacing:-0.24px;">Bureaublad</div>
<div class="t " style="left:739.0px;top:87.9px;font-size:12px;color:#1a1a1a;letter-spacing:-0.29px;">WordPress Blog Maken</div>
<div class="t " style="left:881.0px;top:87.9px;font-size:12px;color:#1a1a1a;letter-spacing:0.11px;">afbeelding-op-maat-maken</div>
<svg style="left:1124px;top:91px;" width="9" height="6" viewBox="0 0 9 6"><path d="M.8 .8 L4.5 4.5 L8.2 .8" fill="none" stroke="#4c4c4c" stroke-width="1.7"/></svg>
<svg style="left:1143px;top:87.5px;" width="11" height="12" viewBox="0 0 11 12"><path d="M8.96 4.6 A4 4 0 1 1 5.2 2.55" fill="none" stroke="#4c4c4c" stroke-width="1.4"/><path d="M9.1 .9 V4.7 H5.6" fill="none" stroke="#4c4c4c" stroke-width="1.3"/></svg>
<div class="a" style="left:1170px;top:83px;width:198px;height:21px;background:#fff;border:1px solid #dedede;box-sizing:border-box;"></div>
<div class="t " style="left:1179.0px;top:87.9px;font-size:12px;color:#6d6d6d;letter-spacing:-0.10px;">Zoeken in afbeelding-op-maa...</div>
<svg style="left:1348px;top:88px;" width="12" height="12" viewBox="0 0 12 12"><circle cx="7.3" cy="4.7" r="3.4" fill="none" stroke="#555" stroke-width="1.5"/><path d="M4.9 7.1 L1 11" stroke="#555" stroke-width="1.9"/></svg>
<div class="a" style="left:452px;top:111.5px;width:927.5px;height:30.5px;background:#f5f6f7;border-bottom:1px solid #ececec;box-sizing:border-box;"></div>
<div class="t " style="left:470.5px;top:120.9px;font-size:12px;color:#1f376b;letter-spacing:-0.28px;">Organiseren</div>
<svg style="left:538px;top:124px;" width="8" height="5" viewBox="0 0 8 5"><path d="M0 0 H8 L4 4.5Z" fill="#1e3287"/></svg>
<div class="t " style="left:576.0px;top:120.9px;font-size:12px;color:#1f376b;letter-spacing:-0.12px;">Nieuwe map</div>
<svg style="left:1288px;top:120.5px;" width="15" height="11" viewBox="0 0 15 11"><rect x=".5" y=".5" width="14" height="10" fill="#fff" stroke="#8a8f96"/><rect x="2" y="2" width="11" height="7" fill="#9cc7e6"/><path d="M2 9 V6.5 L5.5 4.5 L9 7 L13 6 V9Z" fill="#4a6b7d"/></svg>
<svg style="left:1312px;top:124px;" width="8" height="5" viewBox="0 0 8 5"><path d="M0 0 H8 L4 4.5Z" fill="#1e3287"/></svg>
<div class="a" style="left:1349.2px;top:118.2px;width:15.6px;height:15.6px;background:#0c63b8;border-radius:50%;"></div>
<div class="t" style="left:1353.4px;top:119.8px;font-size:12.5px;font-weight:bold;color:#fff;">?</div>
<div class="t " style="left:941.0px;top:158.9px;font-size:12px;color:#6d6d6d;letter-spacing:-0.38px;">Geen zoekresultaten.</div>
<div class="a" style="left:590px;top:143px;width:15px;height:542px;background:#f0f0f0;"></div>
<svg style="left:593px;top:148px;" width="9" height="6" viewBox="0 0 9 6"><path d="M1 5 L4.5 1.5 L8 5" fill="none" stroke="#505050" stroke-width="1.5"/></svg>
<div class="a" style="left:590px;top:158.5px;width:15px;height:520px;background:#cdcdcd;"></div>
<div class="a" style="left:452px;top:533px;width:138px;height:24px;background:#dcdcdc;"></div>
<div class="a" style="left:452px;top:143px;width:138px;height:542px;overflow:hidden;"><div class="a" style="left:-452px;top:-143px;width:0;height:0;"><svg style="left:478px;top:162px;" width="14" height="14" viewBox="0 0 14 14"><path d="M8 0.8 L9.7 5 L14 5.3 L10.7 8.2 L11.8 12.6 L8 10.2 L4.2 12.6 L5.3 8.2 L2 5.3 L6.3 5Z" fill="#3b9be8"/><path d="M.5 13 L5 8.5 M1 9.5 L3.5 7" stroke="#3b9be8" stroke-width="1.2"/></svg>
<div class="t " style="left:496.5px;top:163.9px;font-size:12px;color:#1a1a1a;letter-spacing:-0.22px;">Snelle toegang</div>
<svg style="left:484px;top:186px;" width="16" height="13" viewBox="0 0 16 13"><rect x=".5" y=".5" width="15" height="11" rx="1" fill="#1e98f0"/><rect x="1.5" y="1.5" width="13" height="8" fill="#33aaff"/><rect x="2" y="10" width="12" height="1.6" fill="#0b5ea8"/><rect x="4" y="11.5" width="8" height="1.2" fill="#2a8ae0"/></svg>
<div class="t " style="left:504.3px;top:187.4px;font-size:12px;color:#1a1a1a;letter-spacing:-0.24px;">Bureaublad</div>
<svg style="left:576px;top:187.5px;" width="10" height="10" viewBox="0 0 10 10"><path d="M5.5 .8 L9.2 4.5 L7.8 5 L6.2 6.6 L6 9 L1 4 L3.4 3.8 L5 2.2Z" fill="#8a8a8a"/><path d="M3.3 6.7 L.6 9.4" stroke="#8a8a8a" stroke-width="1.1"/></svg>
<svg style="left:484px;top:208px;" width="16" height="16" viewBox="0 0 16 16"><path d="M5.5 .5 H10.5 V8 H15 L8 15.5 L1 8 H5.5Z" fill="#2f8be6"/><path d="M8 15.5 L1 8 H4 L8 12.5Z" fill="#1b6fc8"/></svg>
<div class="t " style="left:504.3px;top:210.9px;font-size:12px;color:#1a1a1a;letter-spacing:-0.15px;">Downloads</div>
<svg style="left:576px;top:211px;" width="10" height="10" viewBox="0 0 10 10"><path d="M5.5 .8 L9.2 4.5 L7.8 5 L6.2 6.6 L6 9 L1 4 L3.4 3.8 L5 2.2Z" fill="#8a8a8a"/><path d="M3.3 6.7 L.6 9.4" stroke="#8a8a8a" stroke-width="1.1"/></svg>
<svg style="left:485px;top:231.5px;" width="13" height="16" viewBox="0 0 13 16"><path d="M.8 .8 H9 L12.2 4 V15.2 H.8Z" fill="#fff" stroke="#9aa3ad" stroke-width="1"/><path d="M3 4 H8 M3 6.5 H10 M3 12.5 H10" stroke="#6fa8dc" stroke-width="1.1"/><rect x="3" y="8" width="4" height="3" fill="#4a90d9"/><rect x="8" y="8.5" width="2" height="2" fill="#8a8a8a"/></svg>
<div class="t " style="left:504.3px;top:234.4px;font-size:12px;color:#1a1a1a;letter-spacing:-0.10px;">Documenten</div>
<svg style="left:576px;top:234.5px;" width="10" height="10" viewBox="0 0 10 10"><path d="M5.5 .8 L9.2 4.5 L7.8 5 L6.2 6.6 L6 9 L1 4 L3.4 3.8 L5 2.2Z" fill="#8a8a8a"/><path d="M3.3 6.7 L.6 9.4" stroke="#8a8a8a" stroke-width="1.1"/></svg>
<svg style="left:484px;top:256.5px;" width="16" height="13" viewBox="0 0 16 13"><rect x=".5" y=".5" width="15" height="12" fill="#fff" stroke="#9aa3ad"/><rect x="2" y="2" width="12" height="9" fill="#a9d3ee"/><path d="M2 11 V7.5 L6 5.5 L10 8.5 L14 7 V11Z" fill="#3f6f80"/><path d="M2 11 V9.5 L8 8.5 L14 10 V11Z" fill="#7db356"/></svg>
<div class="t " style="left:504.3px;top:257.9px;font-size:12px;color:#1a1a1a;letter-spacing:-0.09px;">Afbeeldingen</div>
<svg style="left:576px;top:258px;" width="10" height="10" viewBox="0 0 10 10"><path d="M5.5 .8 L9.2 4.5 L7.8 5 L6.2 6.6 L6 9 L1 4 L3.4 3.8 L5 2.2Z" fill="#8a8a8a"/><path d="M3.3 6.7 L.6 9.4" stroke="#8a8a8a" stroke-width="1.1"/></svg>
<svg style="left:484px;top:279.5px;" width="16" height="14" viewBox="0 0 16 14"><path d="M5.5 .5 H10.5 L16 10 H11Z" fill="#fbbc04"/><path d="M5.5 .5 L8 4.8 L2.7 14 L0 9.6Z" fill="#0f9d58"/><path d="M5.2 9.6 H16 L13.3 14 H2.7Z" fill="#4285f4"/><path d="M10.5 .5 L8 4.8 L10.8 9.6 H16Z" fill="#ea4335" opacity=".0"/></svg>
<div class="t " style="left:504.3px;top:281.4px;font-size:12px;color:#1a1a1a;letter-spacing:-0.25px;">Google Drive</div>
<svg style="left:576px;top:281.5px;" width="10" height="10" viewBox="0 0 10 10"><path d="M5.5 .8 L9.2 4.5 L7.8 5 L6.2 6.6 L6 9 L1 4 L3.4 3.8 L5 2.2Z" fill="#8a8a8a"/><path d="M3.3 6.7 L.6 9.4" stroke="#8a8a8a" stroke-width="1.1"/></svg>
<svg style="left:485px;top:302px;" width="13" height="16" viewBox="0 0 13 16"><path d="M.5 1.5 Q.5 .5 1.5 .5 H10.5 Q12.5 .8 12.5 3 V15.5 H.5Z" fill="#ffe8a0"/><path d="M9.5 .5 H10.5 Q12.5 .8 12.5 3 V15.5 H9.5Z" fill="#f5cf63"/><path d="M.5 14 H12.5 V15.5 H.5Z" fill="#f0c85a"/></svg>
<div class="t " style="left:504.3px;top:304.9px;font-size:12px;color:#1a1a1a;letter-spacing:0.07px;">afbeelding-op-n</div>
<svg style="left:485px;top:325.5px;" width="13" height="16" viewBox="0 0 13 16"><path d="M.5 1.5 Q.5 .5 1.5 .5 H10.5 Q12.5 .8 12.5 3 V15.5 H.5Z" fill="#ffe8a0"/><path d="M9.5 .5 H10.5 Q12.5 .8 12.5 3 V15.5 H9.5Z" fill="#f5cf63"/><path d="M.5 14 H12.5 V15.5 H.5Z" fill="#f0c85a"/></svg>
<div class="t " style="left:504.3px;top:328.4px;font-size:12px;color:#1a1a1a;letter-spacing:-0.11px;">cookieverklaring</div>
<svg style="left:485px;top:349px;" width="13" height="16" viewBox="0 0 13 16"><path d="M.5 1.5 Q.5 .5 1.5 .5 H10.5 Q12.5 .8 12.5 3 V15.5 H.5Z" fill="#ffe8a0"/><path d="M9.5 .5 H10.5 Q12.5 .8 12.5 3 V15.5 H9.5Z" fill="#f5cf63"/><path d="M.5 14 H12.5 V15.5 H.5Z" fill="#f0c85a"/></svg>
<div class="t " style="left:504.3px;top:351.9px;font-size:12px;color:#1a1a1a;letter-spacing:-0.10px;">hoe-kopteksten-</div>
<svg style="left:485px;top:372.5px;" width="13" height="16" viewBox="0 0 13 16"><path d="M.5 1.5 Q.5 .5 1.5 .5 H10.5 Q12.5 .8 12.5 3 V15.5 H.5Z" fill="#ffe8a0"/><path d="M9.5 .5 H10.5 Q12.5 .8 12.5 3 V15.5 H9.5Z" fill="#f5cf63"/><path d="M.5 14 H12.5 V15.5 H.5Z" fill="#f0c85a"/></svg>
<div class="t " style="left:504.3px;top:375.4px;font-size:12px;color:#1a1a1a;letter-spacing:-0.29px;">WordPress Blog Maken</div>
<svg style="left:476px;top:406px;" width="17" height="11" viewBox="0 0 17 11"><path d="M4 10.5 Q.5 10.5 .5 7.5 Q.5 5 3 4.6 Q3.8 1.5 7 1 Q9.8 .8 11 3.2 Q14 2.8 14.8 5.6 Q16.8 6 16.6 8.2 Q16.4 10.5 14 10.5Z" fill="#1581d9"/><path d="M3 4.6 Q3.8 1.5 7 1 Q9.8 .8 11 3.2 L6 7Z" fill="#0a64b4"/></svg>
<div class="t " style="left:496.5px;top:406.4px;font-size:12px;color:#1a1a1a;letter-spacing:-0.34px;">OneDrive</div>
<svg style="left:478px;top:435px;" width="13" height="16" viewBox="0 0 13 16"><path d="M.5 1.5 Q.5 .5 1.5 .5 H10.5 Q12.5 .8 12.5 3 V15.5 H.5Z" fill="#ffe8a0"/><path d="M9.5 .5 H10.5 Q12.5 .8 12.5 3 V15.5 H9.5Z" fill="#f5cf63"/><path d="M.5 14 H12.5 V15.5 H.5Z" fill="#f0c85a"/></svg>
<div class="t " style="left:496.5px;top:437.9px;font-size:12px;color:#1a1a1a;letter-spacing:-0.41px;">OneDrive - Personal</div>
<svg style="left:476px;top:467px;" width="17" height="15" viewBox="0 0 17 15"><rect x=".5" y=".5" width="16" height="10.5" fill="#57b7f2" stroke="#3a8ccc"/><rect x="2" y="2" width="13" height="7.5" fill="#8fd3fb"/><rect x="6" y="11" width="5" height="2" fill="#9aa3ad"/><rect x="3" y="13" width="11" height="1.5" fill="#b8c0c8"/></svg>
<div class="t " style="left:496.5px;top:469.4px;font-size:12px;color:#1a1a1a;letter-spacing:-0.58px;">Deze pc</div>
<svg style="left:484px;top:490px;" width="16" height="16" viewBox="0 0 16 16"><path d="M8 .5 L15.5 4 V12 L8 15.5 L.5 12 V4Z" fill="#35c3d6"/><path d="M8 7.5 L15.5 4 V12 L8 15.5Z" fill="#1a9fb3"/><path d="M8 7.5 L.5 4 V12 L8 15.5Z" fill="#7fe0ea"/><path d="M8 .5 L15.5 4 L8 7.5 L.5 4Z" fill="#b6f0f5"/></svg>
<div class="t " style="left:504.3px;top:492.9px;font-size:12px;color:#1a1a1a;letter-spacing:-0.07px;">3D-objecten</div>
<svg style="left:484px;top:515px;" width="16" height="13" viewBox="0 0 16 13"><rect x=".5" y=".5" width="15" height="12" fill="#fff" stroke="#9aa3ad"/><rect x="2" y="2" width="12" height="9" fill="#a9d3ee"/><path d="M2 11 V7.5 L6 5.5 L10 8.5 L14 7 V11Z" fill="#3f6f80"/><path d="M2 11 V9.5 L8 8.5 L14 10 V11Z" fill="#7db356"/></svg>
<div class="t " style="left:504.3px;top:516.4px;font-size:12px;color:#1a1a1a;letter-spacing:-0.09px;">Afbeeldingen</div>
<svg style="left:484px;top:538.5px;" width="16" height="13" viewBox="0 0 16 13"><rect x=".5" y=".5" width="15" height="11" rx="1" fill="#1e98f0"/><rect x="1.5" y="1.5" width="13" height="8" fill="#33aaff"/><rect x="2" y="10" width="12" height="1.6" fill="#0b5ea8"/><rect x="4" y="11.5" width="8" height="1.2" fill="#2a8ae0"/></svg>
<div class="t " style="left:504.3px;top:539.9px;font-size:12px;color:#1a1a1a;letter-spacing:-0.24px;">Bureaublad</div>
<svg style="left:485px;top:560.5px;" width="13" height="16" viewBox="0 0 13 16"><path d="M.8 .8 H9 L12.2 4 V15.2 H.8Z" fill="#fff" stroke="#9aa3ad" stroke-width="1"/><path d="M3 4 H8 M3 6.5 H10 M3 12.5 H10" stroke="#6fa8dc" stroke-width="1.1"/><rect x="3" y="8" width="4" height="3" fill="#4a90d9"/><rect x="8" y="8.5" width="2" height="2" fill="#8a8a8a"/></svg>
<div class="t " style="left:504.3px;top:563.4px;font-size:12px;color:#1a1a1a;letter-spacing:-0.10px;">Documenten</div>
<svg style="left:484px;top:584px;" width="16" height="16" viewBox="0 0 16 16"><path d="M5.5 .5 H10.5 V8 H15 L8 15.5 L1 8 H5.5Z" fill="#2f8be6"/><path d="M8 15.5 L1 8 H4 L8 12.5Z" fill="#1b6fc8"/></svg>
<div class="t " style="left:504.3px;top:586.9px;font-size:12px;color:#1a1a1a;letter-spacing:-0.15px;">Downloads</div>
<svg style="left:486px;top:607.5px;" width="12" height="16" viewBox="0 0 12 16"><path d="M5 1 Q6 4 10.5 5.5 Q11.5 8 10 10 Q10 7.5 6.5 6 V12.5 Q6.5 15.5 3.5 15.5 Q.8 15.5 .8 13.3 Q.8 11 3.5 11 Q4.4 11 5 11.4Z" fill="#1f8de0"/></svg>
<div class="t " style="left:504.3px;top:610.4px;font-size:12px;color:#1a1a1a;letter-spacing:-0.17px;">Muziek</div>
<svg style="left:485px;top:631px;" width="14" height="16" viewBox="0 0 14 16"><rect x=".5" y=".5" width="13" height="15" fill="#4a4a4a"/><rect x="3" y="1.5" width="8" height="6" fill="#7fb6d9"/><rect x="3" y="8.5" width="8" height="6" fill="#d9a35a"/><path d="M1.2 2 h1 M1.2 4.5 h1 M1.2 7 h1 M1.2 9.5 h1 M1.2 12 h1 M11.8 2 h1 M11.8 4.5 h1 M11.8 7 h1 M11.8 9.5 h1 M11.8 12 h1" stroke="#eee" stroke-width="1.2"/></svg>
<div class="t " style="left:504.3px;top:633.9px;font-size:12px;color:#1a1a1a;letter-spacing:-0.25px;">Video&#x27;s</div>
<svg style="left:483px;top:655.5px;" width="16" height="13" viewBox="0 0 16 13"><path d="M3 7 H15 L16 12.5 H2Z" fill="#9aa3ad"/><rect x="2" y="9.5" width="14" height="3" fill="#5c6670"/><rect x="12.5" y="10.5" width="2" height="1" fill="#57e389"/><rect x="0" y="0" width="3" height="3" fill="#29a8ff"/><rect x="3.6" y="0" width="3" height="3" fill="#29a8ff"/><rect x="0" y="3.6" width="3" height="3" fill="#29a8ff"/><rect x="3.6" y="3.6" width="3" height="3" fill="#29a8ff"/></svg>
<div class="t " style="left:504.3px;top:657.4px;font-size:12px;color:#1a1a1a;letter-spacing:-0.19px;">Lokale schijf (C:)</div>
<div class="t " style="left:504.3px;top:680.9px;font-size:12px;color:#1a1a1a;letter-spacing:0.08px;">Harde schijf (D:)</div>
</div></div>
<div class="a" style="left:452px;top:685px;width:927.5px;height:204.5px;background:#f0f0f0;"></div>
<div class="t " style="left:491.5px;top:701.4px;font-size:12px;color:#1a1a1a;letter-spacing:-0.41px;">Bestandsnaam:</div>
<div class="t " style="left:508.5px;top:725.9px;font-size:12px;color:#1a1a1a;letter-spacing:-0.48px;">Opslaan als:</div>
<div class="a" style="left:576px;top:697px;width:793px;height:22px;background:#fff;border:1px solid #7a7a7a;box-sizing:border-box;"></div>
<div class="a" style="left:576px;top:721px;width:793px;height:19px;background:#cce4f7;"></div>
<div class="t " style="left:580.0px;top:725.9px;font-size:12px;color:#1a1a1a;letter-spacing:-0.69px;">WebP (*.WEBP)</div>
<svg style="left:1360.5px;top:728.5px;" width="9" height="6" viewBox="0 0 9 6"><path d="M.8 .8 L4.5 4.5 L8.2 .8" fill="none" stroke="#444" stroke-width="1.1"/></svg>
<div class="a" style="left:576px;top:754px;width:154.5px;height:34.5px;background:#cccccc;border:1px solid #bfbfbf;box-sizing:border-box;"></div>
<div class="t " style="left:587.0px;top:765.9px;font-size:12px;color:#838383;letter-spacing:-0.12px;">Save to cloud documents</div>
<div class="t " style="left:812.7px;top:755.2px;font-size:12px;color:#6d6d6d;letter-spacing:-0.94px;">Save:</div>
<div class="a" style="left:845px;top:754.8px;width:12px;height:12px;background:#fff;border:1px solid #d0d0d0;box-sizing:border-box;"></div>
<div class="t " style="left:860.0px;top:755.2px;font-size:12px;color:#6d6d6d;letter-spacing:0.03px;">Notes</div>
<div class="a" style="left:845px;top:776.5px;width:12px;height:12px;background:#fff;border:1px solid #d0d0d0;box-sizing:border-box;"></div>
<div class="t " style="left:860.0px;top:776.9px;font-size:12px;color:#6d6d6d;letter-spacing:-0.27px;">Alpha Channels</div>
<div class="a" style="left:845px;top:798px;width:12px;height:12px;background:#fff;border:1px solid #d0d0d0;box-sizing:border-box;"></div>
<div class="t " style="left:860.0px;top:798.4px;font-size:12px;color:#6d6d6d;letter-spacing:-0.34px;">Spot Colors</div>
<div class="a" style="left:845px;top:819.5px;width:12px;height:12px;background:#fff;border:1px solid #d0d0d0;box-sizing:border-box;"></div>
<div class="t " style="left:860.0px;top:819.9px;font-size:12px;color:#6d6d6d;letter-spacing:-0.67px;">Layers</div>
<div class="t " style="left:1052.8px;top:755.2px;font-size:12px;color:#6d6d6d;letter-spacing:-0.17px;">Color:</div>
<div class="a" style="left:1089px;top:754.8px;width:12px;height:12px;background:#fff;border:1px solid #d0d0d0;box-sizing:border-box;"></div>
<div class="t " style="left:1105.0px;top:755.2px;font-size:12px;color:#6d6d6d;letter-spacing:-0.44px;">Use Proof Setup</div>
<div class="a" style="left:1089px;top:776.5px;width:12px;height:12px;background:#fff;border:1px solid #333;box-sizing:border-box;"></div>
<div class="t " style="left:1105.0px;top:776.9px;font-size:12px;color:#1e6bc5;letter-spacing:-0.61px;">ICC Profile:  sRGB</div>
<div class="t " style="left:1105.0px;top:791.4px;font-size:12px;color:#1e6bc5;letter-spacing:-0.80px;">IEC61966-2.1</div>
<div class="a" style="left:1066px;top:810.5px;width:154px;height:1px;background:#a0a0a0;"></div>
<div class="t " style="left:1052.0px;top:817.9px;font-size:12px;color:#6d6d6d;letter-spacing:-0.23px;">Other:</div>
<div class="a" style="left:1089px;top:817.5px;width:12px;height:12px;background:#fff;border:1px solid #d0d0d0;box-sizing:border-box;"></div>
<div class="t " style="left:1105.0px;top:817.9px;font-size:12px;color:#6d6d6d;letter-spacing:-0.11px;">Thumbnail</div>
<div class="a" style="left:1276.5px;top:854px;width:85px;height:23px;background:#e1e1e1;border:1px solid #adadad;box-sizing:border-box;"></div>
<div class="t " style="left:1294.0px;top:859.9px;font-size:12px;color:#1a1a1a;letter-spacing:-0.41px;">Annuleren</div>
<div class="a" style="left:1175px;top:848px;width:116px;height:33px;background:#ecf5f7;border:3px solid #56cfe1;box-sizing:border-box;"></div>
<div class="a" style="left:1180px;top:854px;width:84px;height:23px;background:#e1e1e1;border:2px solid #0f6fc6;box-sizing:border-box;"></div>
<div class="t " style="left:1201.0px;top:859.9px;font-size:12px;color:#1a1a1a;letter-spacing:-0.39px;">Opslaan</div>
<svg style="left:465px;top:865px;" width="9" height="6" viewBox="0 0 9 6"><path d="M1 5 L4.5 1.5 L8 5" fill="none" stroke="#333" stroke-width="1.4"/></svg>
<div class="t " style="left:482.0px;top:862.9px;font-size:12px;color:#1a1a1a;letter-spacing:-0.20px;">Mappen verbergen</div>
<svg style="left:1369px;top:879px;" width="9" height="9" viewBox="0 0 9 9"><path d="M7 1 h1.5 M4 4 h1.5 M7 4 h1.5 M1 7 h1.5 M4 7 h1.5 M7 7 h1.5" stroke="#b5b5b5" stroke-width="1.5"/></svg>


<div class="a" style="left:575px;top:365px;width:1237px;height:354.5px;background:#fff;box-sizing:border-box;border:1px solid #6e6e6e;border-bottom:none;box-shadow:2px 2px 5px rgba(0,0,0,.45);"></div>
<div class="t " style="left:578.0px;top:368.0px;font-size:12px;color:#111;letter-spacing:-0.50px;">Photoshop (*.PSD;*.PDD;*.PSDT)</div>
<div class="t " style="left:578.0px;top:382.7px;font-size:12px;color:#111;letter-spacing:-0.31px;">Large Document Format (*.PSB)</div>
<div class="t " style="left:578.0px;top:397.4px;font-size:12px;color:#111;letter-spacing:-0.45px;">AVIF (*.AVIF)</div>
<div class="t " style="left:578.0px;top:412.1px;font-size:12px;color:#111;letter-spacing:-0.53px;">BMP (*.BMP;*.RLE;*.DIB)</div>
<div class="t " style="left:578.0px;top:426.8px;font-size:12px;color:#111;letter-spacing:-0.28px;">Dicom (*.DCM;*.DC3;*.DIC)</div>
<div class="t " style="left:578.0px;top:441.5px;font-size:12px;color:#111;letter-spacing:-0.62px;">Photoshop EPS (*.EPS)</div>
<div class="t " style="left:578.0px;top:456.2px;font-size:12px;color:#111;letter-spacing:-0.71px;">GIF (*.GIF)</div>
<div class="t " style="left:578.0px;top:470.9px;font-size:12px;color:#111;letter-spacing:-0.51px;">IFF Format (*.IFF;*.TDI)</div>
<div class="t " style="left:578.0px;top:485.6px;font-size:12px;color:#111;letter-spacing:-1.04px;">JPEG (*.JPG;*.JPEG;*.JPE)</div>
<div class="t " style="left:578.0px;top:500.3px;font-size:12px;color:#111;letter-spacing:-0.84px;">JPEG 2000 (*.JPF;*.JPX;*.JP2;*.J2C;*.J2K;*.JPC)</div>
<div class="t " style="left:578.0px;top:515.0px;font-size:12px;color:#111;letter-spacing:-0.89px;">JPEG Stereo (*.JPS)</div>
<div class="t " style="left:578.0px;top:529.7px;font-size:12px;color:#111;letter-spacing:-0.93px;">JPEG XL (*.JXL)</div>
<div class="t " style="left:578.0px;top:544.4px;font-size:12px;color:#111;letter-spacing:-0.04px;">Multi-Picture Format (*.MPO)</div>
<div class="t " style="left:578.0px;top:559.1px;font-size:12px;color:#111;letter-spacing:-0.70px;">PCX (*.PCX)</div>
<div class="t " style="left:578.0px;top:573.8px;font-size:12px;color:#111;letter-spacing:-0.47px;">Photoshop PDF (*.PDF;*.PDP)</div>
<div class="t " style="left:578.0px;top:588.5px;font-size:12px;color:#111;letter-spacing:-0.31px;">Photoshop Raw (*.RAW)</div>
<div class="t " style="left:578.0px;top:603.2px;font-size:12px;color:#111;letter-spacing:-0.56px;">Pixar (*.PXR)</div>
<div class="t " style="left:578.0px;top:617.9px;font-size:12px;color:#111;letter-spacing:-0.54px;">PNG (*.PNG;*.PNG)</div>
<div class="t " style="left:578.0px;top:632.6px;font-size:12px;color:#111;letter-spacing:-0.23px;">Portable Bit Map (*.PBM;*.PGM;*.PPM;*.PNM;*.PFM;*.PAM)</div>
<div class="t " style="left:578.0px;top:647.3px;font-size:12px;color:#111;letter-spacing:-0.62px;">Scitex CT (*.SCT)</div>
<div class="t " style="left:578.0px;top:662.0px;font-size:12px;color:#111;letter-spacing:-0.63px;">Substance 3D Viewer (*.ASD;*.GLB;*.GLTF;*.USD;*.USDA;*.USDC;*.USDZ;*.FBX;*.OBJ;*.PLY;*.3MF;*.SAT;*.3DS;*.DWF;*.DWFX;*.IPT;*.EXP;*.CGR;*.DAE;*.PRT;*.IGS;*.IGES;*.X_B;*.X_T;*.PRC;*.RFA;*.3DM;*.PAR;*.STL;*.STP;*.STEP;*.U3D;*.WRL;*.VRML)</div>
<div class="t " style="left:578.0px;top:676.7px;font-size:12px;color:#111;letter-spacing:-0.55px;">Targa (*.TGA;*.VDA;*.ICB;*.VST)</div>
<div class="t " style="left:578.0px;top:691.4px;font-size:12px;color:#111;letter-spacing:-0.73px;">TIFF (*.TIF;*.TIFF)</div>
<div class="a" style="left:575px;top:700.7px;width:795.5px;height:41.3px;border:3.2px solid #56cfe1;box-sizing:border-box;"></div>
<div class="a" style="left:578.2px;top:704px;width:1233.8px;height:15.2px;background:#0078d7;"></div>
<div class="a" style="left:578.2px;top:719.2px;width:790px;height:1.3px;background:#3a4a58;"></div>
<div class="t " style="left:578.5px;top:706.1px;font-size:12px;color:#fff;letter-spacing:-0.69px;">WebP (*.WEBP)</div>


<svg style="left:1366.8px;top:685.5px;" width="72" height="72" viewBox="0 0 72 72"><circle cx="36" cy="36" r="34.7" fill="#4fd7e6"/><path d="M49.5 36 H22.8 M31 27.5 L22.2 36 L31 44.5" fill="none" stroke="#0a0a0a" stroke-width="3.3" stroke-linecap="round" stroke-linejoin="round"/></svg>
<svg style="left:1273.8px;top:829.2px;" width="72" height="72" viewBox="0 0 72 72"><circle cx="36" cy="36" r="34.7" fill="#4fd7e6"/><path d="M49.5 36 H22.8 M31 27.5 L22.2 36 L31 44.5" fill="none" stroke="#0a0a0a" stroke-width="3.3" stroke-linecap="round" stroke-linejoin="round"/></svg>


</div>
</body>
</html>
